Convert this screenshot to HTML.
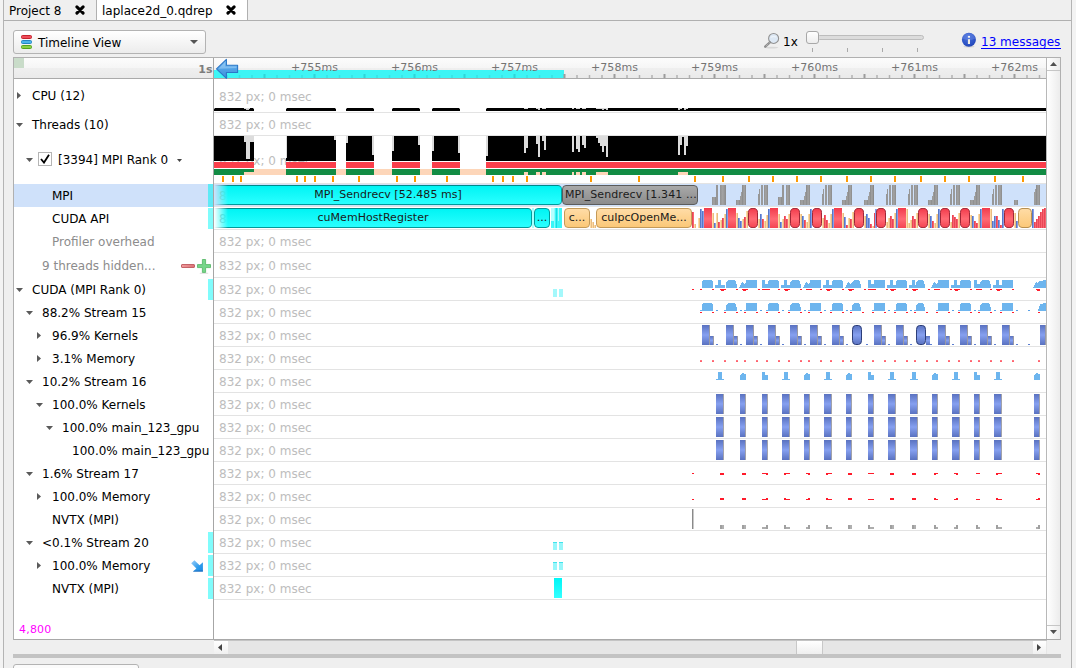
<!DOCTYPE html><html><head><meta charset="utf-8"><title>laplace2d_0.qdrep</title><style>
html,body{margin:0;padding:0;}
body{width:1076px;height:668px;overflow:hidden;background:#efefef;font-family:"DejaVu Sans","Liberation Sans",sans-serif;font-size:12px;color:#000;position:relative;}
div,span,svg{position:absolute;box-sizing:border-box;}
.t{white-space:nowrap;line-height:14px;height:14px;letter-spacing:0;}
.g{color:#bdbdbd;letter-spacing:0;}
.lbl{white-space:nowrap;line-height:14px;height:14px;left:0;}
.dim{color:#8c8c8c;}
.sep{left:214px;width:832px;height:1px;background:#e3e3e3;}
.rt{white-space:nowrap;line-height:12px;font-size:11px;letter-spacing:0.03px;color:#747474;text-align:center;width:60px;}
.bt{white-space:nowrap;line-height:14px;font-size:12px;text-align:center;overflow:hidden;}
</style></head><body>
<div style="left:0px;top:0px;width:3px;height:668px;background:#f3f3f3;"></div>
<div style="left:3px;top:0px;width:1px;height:668px;background:#b4b4b4;"></div>
<div style="left:1071px;top:0px;width:1px;height:668px;background:#b4b4b4;"></div>
<div style="left:1072px;top:0px;width:4px;height:668px;background:#f3f3f3;"></div>
<div style="left:97px;top:0px;width:150px;height:20px;background:#ffffff;"></div>
<div style="left:4px;top:20px;width:1067px;height:1px;background:#b0b0b0;"></div>
<div style="left:96px;top:0px;width:1px;height:20px;background:#b0b0b0;"></div>
<div style="left:247px;top:0px;width:1px;height:20px;background:#b0b0b0;"></div>
<div class="t" style="left:9px;top:4px;">Project 8</div>
<div class="t" style="left:102px;top:4px;">laplace2d_0.qdrep</div>
<svg style="left:75px;top:5px;" width="10" height="10" viewBox="0 0 10 10"><path d="M1.9 1.9 L8.1 8.1 M8.1 1.9 L1.9 8.1" stroke="#000" stroke-width="3" stroke-linecap="round"/></svg>
<svg style="left:226px;top:5px;" width="10" height="10" viewBox="0 0 10 10"><path d="M1.9 1.9 L8.1 8.1 M8.1 1.9 L1.9 8.1" stroke="#000" stroke-width="3" stroke-linecap="round"/></svg>
<div style="left:13px;top:30px;width:193px;height:24px;border:1px solid #b3b3b3;border-radius:3px;background:linear-gradient(#ffffff,#ececec);"></div>
<svg style="left:21px;top:35px;" width="11" height="14" viewBox="0 0 11 14"><rect x="0.5" y="0.5" width="10" height="3" rx="1" fill="#ee4a58" stroke="#c4232c"/><rect x="0.5" y="5.5" width="10" height="3" rx="1" fill="#4ab4ea" stroke="#2484c4"/><rect x="0.5" y="10.5" width="10" height="3" rx="1" fill="#8ad044" stroke="#56a222"/></svg>
<div class="t" style="left:38px;top:36px;">Timeline View</div>
<svg style="left:190px;top:40px;" width="8" height="4" viewBox="0 0 8 4"><path d="M0 0 L8 0 L4 4 Z" fill="#555"/></svg>
<svg style="left:763px;top:32px;" width="17" height="17" viewBox="0 0 17 17"><ellipse cx="8.5" cy="15.6" rx="7" ry="0.8" fill="#d8d8d8"/><circle cx="10.6" cy="6.45" r="5" fill="#dde8f4" stroke="#929292" stroke-width="1.1"/><path d="M7.6 5.2 Q10 4.2 13.4 5" stroke="#f4f8fc" stroke-width="1" fill="none"/><path d="M6.9 10.4 L2.2 14.7" stroke="#8c8c8c" stroke-width="2.3" stroke-linecap="round"/><path d="M6.6 10.7 L2.5 14.4" stroke="#d4d4d4" stroke-width="0.8" stroke-dasharray="1 1"/></svg>
<div class="t" style="left:783px;top:35px;">1x</div>
<div style="left:817px;top:35px;width:107px;height:5px;border:1px solid #bdbdbd;border-radius:3px;background:#dcdcdc;"></div>
<div style="left:806px;top:31px;width:13px;height:13px;border:1px solid #a8a8a8;border-radius:3px;background:linear-gradient(#ffffff,#ededed);"></div>
<div style="left:812px;top:48px;width:1px;height:4px;background:#a9a9a9;"></div>
<div style="left:847px;top:48px;width:1px;height:4px;background:#a9a9a9;"></div>
<div style="left:882px;top:48px;width:1px;height:4px;background:#a9a9a9;"></div>
<div style="left:917px;top:48px;width:1px;height:4px;background:#a9a9a9;"></div>
<svg style="left:961px;top:32px;" width="16" height="16" viewBox="0 0 16 16"><defs><radialGradient id="ig" cx="0.4" cy="0.3" r="0.8"><stop offset="0" stop-color="#4a72dc"/><stop offset="0.7" stop-color="#2c52c4"/><stop offset="1" stop-color="#1c3cac"/></radialGradient></defs><ellipse cx="8" cy="14.6" rx="5.5" ry="0.9" fill="#d4d4d4"/><circle cx="7.9" cy="7.7" r="7" fill="url(#ig)"/><path d="M1.6 6.6 A6.4 6.4 0 0 1 14.2 6.6 Q8 9.6 1.6 6.6 Z" fill="#6a8ae4" opacity="0.45"/><rect x="6.9" y="7.2" width="2.1" height="4.8" fill="#f2eee2"/><rect x="6.9" y="3.9" width="2.1" height="1.8" fill="#f8f6f0"/></svg>
<div class="t" style="left:981px;top:35px;color:#0000ff;letter-spacing:0;">13 messages</div>
<div style="left:981px;top:48px;width:80px;height:1px;background:#0000ff;"></div>
<div style="left:13px;top:57px;width:1048px;height:583px;background:#ffffff;border:1px solid #b0b0b0;"></div>
<div style="left:14px;top:58px;width:1032px;height:20px;background:linear-gradient(#fcfcfc 0%,#f6f6f6 48%,#efefef 52%,#eaeaea 100%);"></div>
<div style="left:14px;top:78px;width:1032px;height:1px;background:#aaaaaa;"></div>
<div style="left:14px;top:58px;width:10px;height:10px;background:#c9dcc9;"></div>
<div class="t" style="left:150.5px;top:63px;width:62px;text-align:right;font-weight:bold;font-size:11px;color:#7d7d7d;">1s</div>
<div style="left:214px;top:70px;width:350px;height:8px;background:#3df5f5;"></div>
<div class="rt" style="left:284.5px;top:61.5px;">+755ms</div>
<div class="rt" style="left:384.5px;top:61.5px;">+756ms</div>
<div class="rt" style="left:484.5px;top:61.5px;">+757ms</div>
<div class="rt" style="left:584.5px;top:61.5px;">+758ms</div>
<div class="rt" style="left:684.5px;top:61.5px;">+759ms</div>
<div class="rt" style="left:784.5px;top:61.5px;">+760ms</div>
<div class="rt" style="left:884.5px;top:61.5px;">+761ms</div>
<div class="rt" style="left:984.5px;top:61.5px;">+762ms</div>
<svg style="left:0;top:0;" width="1076" height="80" viewBox="0 0 1076 80"><rect x="226.25" y="75" width="1.5" height="3" fill="#37e2e4"/><rect x="238.75" y="75" width="1.5" height="3" fill="#37e2e4"/><rect x="251.25" y="75" width="1.5" height="3" fill="#37e2e4"/><rect x="263.50" y="74" width="2" height="4" fill="#2fd6d8"/><rect x="276.25" y="75" width="1.5" height="3" fill="#37e2e4"/><rect x="288.75" y="75" width="1.5" height="3" fill="#37e2e4"/><rect x="301.25" y="75" width="1.5" height="3" fill="#37e2e4"/><rect x="313.50" y="74" width="2" height="4" fill="#2fd6d8"/><rect x="326.25" y="75" width="1.5" height="3" fill="#37e2e4"/><rect x="338.75" y="75" width="1.5" height="3" fill="#37e2e4"/><rect x="351.25" y="75" width="1.5" height="3" fill="#37e2e4"/><rect x="363.50" y="74" width="2" height="4" fill="#2fd6d8"/><rect x="376.25" y="75" width="1.5" height="3" fill="#37e2e4"/><rect x="388.75" y="75" width="1.5" height="3" fill="#37e2e4"/><rect x="401.25" y="75" width="1.5" height="3" fill="#37e2e4"/><rect x="413.50" y="74" width="2" height="4" fill="#2fd6d8"/><rect x="426.25" y="75" width="1.5" height="3" fill="#37e2e4"/><rect x="438.75" y="75" width="1.5" height="3" fill="#37e2e4"/><rect x="451.25" y="75" width="1.5" height="3" fill="#37e2e4"/><rect x="463.50" y="74" width="2" height="4" fill="#2fd6d8"/><rect x="476.25" y="75" width="1.5" height="3" fill="#37e2e4"/><rect x="488.75" y="75" width="1.5" height="3" fill="#37e2e4"/><rect x="501.25" y="75" width="1.5" height="3" fill="#37e2e4"/><rect x="513.50" y="74" width="2" height="4" fill="#2fd6d8"/><rect x="526.25" y="75" width="1.5" height="3" fill="#37e2e4"/><rect x="538.75" y="75" width="1.5" height="3" fill="#37e2e4"/><rect x="551.25" y="75" width="1.5" height="3" fill="#37e2e4"/><rect x="563.50" y="74" width="2" height="4" fill="#9c9c9c"/><rect x="576.25" y="75" width="1.5" height="3" fill="#b2b2b2"/><rect x="588.75" y="75" width="1.5" height="3" fill="#b2b2b2"/><rect x="601.25" y="75" width="1.5" height="3" fill="#b2b2b2"/><rect x="613.50" y="74" width="2" height="4" fill="#9c9c9c"/><rect x="626.25" y="75" width="1.5" height="3" fill="#b2b2b2"/><rect x="638.75" y="75" width="1.5" height="3" fill="#b2b2b2"/><rect x="651.25" y="75" width="1.5" height="3" fill="#b2b2b2"/><rect x="663.50" y="74" width="2" height="4" fill="#9c9c9c"/><rect x="676.25" y="75" width="1.5" height="3" fill="#b2b2b2"/><rect x="688.75" y="75" width="1.5" height="3" fill="#b2b2b2"/><rect x="701.25" y="75" width="1.5" height="3" fill="#b2b2b2"/><rect x="713.50" y="74" width="2" height="4" fill="#9c9c9c"/><rect x="726.25" y="75" width="1.5" height="3" fill="#b2b2b2"/><rect x="738.75" y="75" width="1.5" height="3" fill="#b2b2b2"/><rect x="751.25" y="75" width="1.5" height="3" fill="#b2b2b2"/><rect x="763.50" y="74" width="2" height="4" fill="#9c9c9c"/><rect x="776.25" y="75" width="1.5" height="3" fill="#b2b2b2"/><rect x="788.75" y="75" width="1.5" height="3" fill="#b2b2b2"/><rect x="801.25" y="75" width="1.5" height="3" fill="#b2b2b2"/><rect x="813.50" y="74" width="2" height="4" fill="#9c9c9c"/><rect x="826.25" y="75" width="1.5" height="3" fill="#b2b2b2"/><rect x="838.75" y="75" width="1.5" height="3" fill="#b2b2b2"/><rect x="851.25" y="75" width="1.5" height="3" fill="#b2b2b2"/><rect x="863.50" y="74" width="2" height="4" fill="#9c9c9c"/><rect x="876.25" y="75" width="1.5" height="3" fill="#b2b2b2"/><rect x="888.75" y="75" width="1.5" height="3" fill="#b2b2b2"/><rect x="901.25" y="75" width="1.5" height="3" fill="#b2b2b2"/><rect x="913.50" y="74" width="2" height="4" fill="#9c9c9c"/><rect x="926.25" y="75" width="1.5" height="3" fill="#b2b2b2"/><rect x="938.75" y="75" width="1.5" height="3" fill="#b2b2b2"/><rect x="951.25" y="75" width="1.5" height="3" fill="#b2b2b2"/><rect x="963.50" y="74" width="2" height="4" fill="#9c9c9c"/><rect x="976.25" y="75" width="1.5" height="3" fill="#b2b2b2"/><rect x="988.75" y="75" width="1.5" height="3" fill="#b2b2b2"/><rect x="1001.25" y="75" width="1.5" height="3" fill="#b2b2b2"/><rect x="1013.50" y="74" width="2" height="4" fill="#9c9c9c"/><rect x="1026.25" y="75" width="1.5" height="3" fill="#b2b2b2"/><rect x="1038.75" y="75" width="1.5" height="3" fill="#b2b2b2"/></svg>
<svg style="left:215px;top:58px;" width="24" height="22" viewBox="0 0 24 22"><defs><linearGradient id="ag" x1="0" y1="0" x2="0" y2="1"><stop offset="0" stop-color="#86c4f4"/><stop offset="0.5" stop-color="#52a2e6"/><stop offset="1" stop-color="#3a90dc"/></linearGradient></defs><path d="M11.4 1.4 L1.5 10.9 L11.4 20.3 L11.4 14.5 L22.6 14.5 L22.6 7.3 L11.4 7.3 Z" fill="url(#ag)" stroke="#2b77c8" stroke-width="1.1" stroke-linejoin="round"/><path d="M10.2 4.2 L3.4 10.8 L10.2 10.4 L21.4 10 L21.4 8.4 L10.2 8.4 Z" fill="#9fd0f6" opacity="0.55"/></svg>
<div style="left:213px;top:58px;width:1px;height:582px;background:#a6a6a6;"></div>
<div style="left:1046px;top:58px;width:1px;height:582px;background:#b8b8b8;"></div>
<div style="left:1047px;top:58px;width:13px;height:581px;background:linear-gradient(90deg,#ffffff,#ececec);"></div>
<div style="left:1047px;top:70px;width:13px;height:1px;background:#c6c6c6;"></div>
<div style="left:1047px;top:625px;width:13px;height:1px;background:#c6c6c6;"></div>
<svg style="left:1050px;top:62px;" width="7" height="4" viewBox="0 0 7 4"><path d="M0 4 L7 4 L3.5 0 Z" fill="#505050"/></svg>
<svg style="left:1050px;top:630px;" width="7" height="4" viewBox="0 0 7 4"><path d="M0 0 L7 0 L3.5 4 Z" fill="#505050"/></svg>
<div style="left:14px;top:639px;width:1046px;height:1px;background:#a8a8a8;"></div>
<div style="left:13px;top:640px;width:1048px;height:1px;background:#efefef;"></div>
<div style="left:214px;top:640px;width:833px;height:1px;background:#c4c4c4;"></div>
<div style="left:214px;top:641px;width:833px;height:13px;background:#e6e6e6;"></div>
<div style="left:214px;top:641px;width:14px;height:13px;background:linear-gradient(#ffffff,#f0f0f0);"></div>
<div style="left:1033px;top:641px;width:13px;height:13px;background:linear-gradient(#ffffff,#f0f0f0);"></div>
<svg style="left:218px;top:644px;" width="4" height="7" viewBox="0 0 4 7"><path d="M4 0 L4 7 L0 3.5 Z" fill="#444"/></svg>
<svg style="left:1037px;top:644px;" width="4" height="7" viewBox="0 0 4 7"><path d="M0 0 L0 7 L4 3.5 Z" fill="#444"/></svg>
<div style="left:796px;top:641px;width:27px;height:13px;background:linear-gradient(#ffffff,#efefef);border-left:1px solid #c8c8c8;border-right:1px solid #c8c8c8;"></div>
<div style="left:13px;top:654px;width:1048px;height:4px;background:#c3c3c3;"></div>
<div style="left:13px;top:664px;width:126px;height:10px;border:1px solid #b3b3b3;border-radius:3px;background:#fbfbfb;"></div>
<div class="t" style="left:19px;top:623px;font-size:11px;letter-spacing:0.2px;color:#ff00ff;">4,800</div>
<div style="left:14px;top:184px;width:199px;height:23px;background:#cfe1fa;"></div>
<div style="left:214px;top:184px;width:832px;height:23px;background:#cfe1fa;"></div>
<div class="t" style="left:32px;top:89px;">CPU (12)</div>
<svg style="left:17px;top:92px;" width="4" height="7" viewBox="0 0 4 7"><path d="M0 0 L4 3.5 L0 7 Z" fill="#5a5a5a"/></svg>
<div class="t" style="left:32px;top:118px;">Threads (10)</div>
<svg style="left:16px;top:123px;" width="7" height="4" viewBox="0 0 7 4"><path d="M0 0 L7 0 L3.5 4 Z" fill="#5a5a5a"/></svg>
<div class="t" style="left:58px;top:153px;">[3394] MPI Rank 0</div>
<svg style="left:26px;top:158px;" width="7" height="4" viewBox="0 0 7 4"><path d="M0 0 L7 0 L3.5 4 Z" fill="#5a5a5a"/></svg>
<div class="t" style="left:52px;top:189px;">MPI</div>
<div class="t" style="left:52px;top:212px;">CUDA API</div>
<div class="t dim" style="left:52px;top:235px;">Profiler overhead</div>
<div class="t dim" style="left:42px;top:259px;">9 threads hidden...</div>
<div class="t" style="left:32px;top:283px;">CUDA (MPI Rank 0)</div>
<svg style="left:16px;top:288px;" width="7" height="4" viewBox="0 0 7 4"><path d="M0 0 L7 0 L3.5 4 Z" fill="#5a5a5a"/></svg>
<div class="t" style="left:42px;top:306px;">88.2% Stream 15</div>
<svg style="left:26px;top:311px;" width="7" height="4" viewBox="0 0 7 4"><path d="M0 0 L7 0 L3.5 4 Z" fill="#5a5a5a"/></svg>
<div class="t" style="left:52px;top:329px;">96.9% Kernels</div>
<svg style="left:37px;top:332px;" width="4" height="7" viewBox="0 0 4 7"><path d="M0 0 L4 3.5 L0 7 Z" fill="#5a5a5a"/></svg>
<div class="t" style="left:52px;top:352px;">3.1% Memory</div>
<svg style="left:37px;top:355px;" width="4" height="7" viewBox="0 0 4 7"><path d="M0 0 L4 3.5 L0 7 Z" fill="#5a5a5a"/></svg>
<div class="t" style="left:42px;top:375px;">10.2% Stream 16</div>
<svg style="left:26px;top:380px;" width="7" height="4" viewBox="0 0 7 4"><path d="M0 0 L7 0 L3.5 4 Z" fill="#5a5a5a"/></svg>
<div class="t" style="left:52px;top:398px;">100.0% Kernels</div>
<svg style="left:36px;top:403px;" width="7" height="4" viewBox="0 0 7 4"><path d="M0 0 L7 0 L3.5 4 Z" fill="#5a5a5a"/></svg>
<div class="t" style="left:62px;top:421px;">100.0% main_123_gpu</div>
<svg style="left:46px;top:426px;" width="7" height="4" viewBox="0 0 7 4"><path d="M0 0 L7 0 L3.5 4 Z" fill="#5a5a5a"/></svg>
<div class="t" style="left:72px;top:444px;">100.0% main_123_gpu</div>
<div class="t" style="left:42px;top:467px;">1.6% Stream 17</div>
<svg style="left:26px;top:472px;" width="7" height="4" viewBox="0 0 7 4"><path d="M0 0 L7 0 L3.5 4 Z" fill="#5a5a5a"/></svg>
<div class="t" style="left:52px;top:490px;">100.0% Memory</div>
<svg style="left:37px;top:493px;" width="4" height="7" viewBox="0 0 4 7"><path d="M0 0 L4 3.5 L0 7 Z" fill="#5a5a5a"/></svg>
<div class="t" style="left:52px;top:513px;">NVTX (MPI)</div>
<div class="t" style="left:42px;top:536px;">&lt;0.1% Stream 20</div>
<svg style="left:26px;top:541px;" width="7" height="4" viewBox="0 0 7 4"><path d="M0 0 L7 0 L3.5 4 Z" fill="#5a5a5a"/></svg>
<div class="t" style="left:52px;top:559px;">100.0% Memory</div>
<svg style="left:37px;top:562px;" width="4" height="7" viewBox="0 0 4 7"><path d="M0 0 L4 3.5 L0 7 Z" fill="#5a5a5a"/></svg>
<div class="t" style="left:52px;top:582px;">NVTX (MPI)</div>
<div style="left:38px;top:152px;width:14px;height:14px;background:#fff;border:1px solid #b5b5b5;"></div>
<svg style="left:40px;top:154px;" width="10" height="10" viewBox="0 0 10 10"><path d="M1 5 L4 8.6 L9 0.8" fill="none" stroke="#000" stroke-width="1.8"/></svg>
<svg style="left:177px;top:159px;" width="5" height="3" viewBox="0 0 5 3"><path d="M0 0 L5 0 L2.5 3 Z" fill="#444"/></svg>
<div style="left:181px;top:264px;width:14px;height:4px;background:linear-gradient(90deg,#f09a9c,#dc7478);border:1px solid #c46468;border-radius:1px;"></div>
<svg style="left:197px;top:259px;" width="14" height="15" viewBox="0 0 14 15"><ellipse cx="7" cy="14.2" rx="4.5" ry="0.6" fill="#dcdcdc"/><path d="M5.4 0.5 H8.6 V5.6 H13.5 V8.6 H8.6 V13.4 H5.4 V8.6 H0.5 V5.6 H5.4 Z" fill="#76d68a" stroke="#5cba6c" stroke-width="0.9" stroke-linejoin="round"/></svg>
<svg style="left:191.4px;top:560px;" width="13" height="13" viewBox="0 0 13 13"><defs><linearGradient id="dg" x1="0" y1="0" x2="1" y2="1"><stop offset="0" stop-color="#9ed0fa"/><stop offset="0.6" stop-color="#2e9cec"/><stop offset="1" stop-color="#1888e4"/></linearGradient></defs><path d="M0.2 3.3 L3.4 0.2 L8.6 5.2 L11.9 2.2 L11.9 11.6 L2 11.6 L5.4 8.4 Z" fill="url(#dg)"/><path d="M2 11.6 L11.9 11.6 L11.9 10.6 L3 10.8 Z" fill="#1f64b4"/></svg>
<div class="sep" style="top:112px;"></div>
<div class="sep" style="top:135px;"></div>
<div class="sep" style="top:183px;"></div>
<div class="sep" style="top:206px;"></div>
<div class="sep" style="top:229px;"></div>
<div class="sep" style="top:252px;"></div>
<div class="sep" style="top:277px;"></div>
<div class="sep" style="top:300px;"></div>
<div class="sep" style="top:323px;"></div>
<div class="sep" style="top:346px;"></div>
<div class="sep" style="top:369px;"></div>
<div class="sep" style="top:392px;"></div>
<div class="sep" style="top:415px;"></div>
<div class="sep" style="top:438px;"></div>
<div class="sep" style="top:461px;"></div>
<div class="sep" style="top:484px;"></div>
<div class="sep" style="top:507px;"></div>
<div class="sep" style="top:530px;"></div>
<div class="sep" style="top:553px;"></div>
<div class="sep" style="top:576px;"></div>
<div class="sep" style="top:599px;"></div>
<div class="t g" style="left:219px;top:90px;">832 px; 0 msec</div>
<div class="t g" style="left:219px;top:118px;">832 px; 0 msec</div>
<div class="t g" style="left:219px;top:154px;">832 px; 0 msec</div>
<div class="t g" style="left:219px;top:189px;">832 px; 0 msec</div>
<div class="t g" style="left:219px;top:212px;">832 px; 0 msec</div>
<div class="t g" style="left:219px;top:235px;">832 px; 0 msec</div>
<div class="t g" style="left:219px;top:259px;">832 px; 0 msec</div>
<div class="t g" style="left:219px;top:283px;">832 px; 0 msec</div>
<div class="t g" style="left:219px;top:306px;">832 px; 0 msec</div>
<div class="t g" style="left:219px;top:329px;">832 px; 0 msec</div>
<div class="t g" style="left:219px;top:352px;">832 px; 0 msec</div>
<div class="t g" style="left:219px;top:375px;">832 px; 0 msec</div>
<div class="t g" style="left:219px;top:398px;">832 px; 0 msec</div>
<div class="t g" style="left:219px;top:421px;">832 px; 0 msec</div>
<div class="t g" style="left:219px;top:444px;">832 px; 0 msec</div>
<div class="t g" style="left:219px;top:467px;">832 px; 0 msec</div>
<div class="t g" style="left:219px;top:490px;">832 px; 0 msec</div>
<div class="t g" style="left:219px;top:513px;">832 px; 0 msec</div>
<div class="t g" style="left:219px;top:536px;">832 px; 0 msec</div>
<div class="t g" style="left:219px;top:559px;">832 px; 0 msec</div>
<div class="t g" style="left:219px;top:582px;">832 px; 0 msec</div>
<div style="left:208px;top:184px;width:5px;height:23px;background:#5eeaf6;"></div>
<div style="left:208px;top:208px;width:5px;height:21px;background:#80fcfc;"></div>
<div style="left:208px;top:279px;width:5px;height:21px;background:#80fcfc;"></div>
<div style="left:208px;top:532px;width:5px;height:21px;background:#80fcfc;"></div>
<div style="left:208px;top:555px;width:5px;height:21px;background:#80fcfc;"></div>
<div style="left:208px;top:578px;width:5px;height:21px;background:#80fcfc;"></div>
<svg style="left:0;top:0;" width="1076" height="668" viewBox="0 0 1076 668" shape-rendering="crispEdges"><defs>
<linearGradient id="kb" x1="0" y1="0" x2="0" y2="1"><stop offset="0" stop-color="#5a72c0"/><stop offset="0.5" stop-color="#86a0f0"/><stop offset="1" stop-color="#5a72c0"/></linearGradient>
<linearGradient id="rd" x1="0" y1="0" x2="0" y2="1"><stop offset="0" stop-color="#f23c4c"/><stop offset="0.55" stop-color="#ff6a74"/><stop offset="1" stop-color="#f44452"/></linearGradient>
<linearGradient id="gy" x1="0" y1="0" x2="1" y2="0"><stop offset="0" stop-color="#8e8e8e"/><stop offset="0.5" stop-color="#a4a4a4"/><stop offset="1" stop-color="#8a8a8a"/></linearGradient>
<linearGradient id="pc" x1="0" y1="0" x2="0" y2="1"><stop offset="0" stop-color="#ffdca6"/><stop offset="1" stop-color="#fbc878"/></linearGradient>
<linearGradient id="cy" x1="0" y1="0" x2="0" y2="1"><stop offset="0" stop-color="#00f6f6"/><stop offset="1" stop-color="#34ffff"/></linearGradient>
</defs>
<rect x="214" y="108" width="40" height="3" fill="#000"/>
<rect x="286" y="108" width="50" height="3" fill="#000"/>
<rect x="346" y="108" width="28" height="3" fill="#000"/>
<rect x="392" y="108" width="28" height="3" fill="#000"/>
<rect x="432" y="108" width="28" height="3" fill="#000"/>
<rect x="486" y="108" width="560" height="3" fill="#000"/>
<rect x="244" y="108" width="6" height="1" fill="#d8d8d8"/>
<rect x="524" y="108" width="4" height="1" fill="#d8d8d8"/>
<rect x="536" y="108" width="4" height="1" fill="#d8d8d8"/>
<rect x="542" y="108" width="4" height="1" fill="#d8d8d8"/>
<rect x="572" y="108" width="2" height="1" fill="#d8d8d8"/>
<rect x="576" y="108" width="4" height="1" fill="#d8d8d8"/>
<rect x="582" y="108" width="4" height="1" fill="#d8d8d8"/>
<rect x="596" y="108" width="12" height="1" fill="#d8d8d8"/>
<rect x="678" y="108" width="4" height="1" fill="#d8d8d8"/>
<rect x="684" y="108" width="4" height="1" fill="#d8d8d8"/>
<rect x="246" y="109" width="3" height="1" fill="#c8c8c8"/>
<rect x="538" y="109" width="2" height="1" fill="#c8c8c8"/>
<rect x="606" y="109" width="2" height="1" fill="#c8c8c8"/>
<rect x="602" y="109" width="2" height="1" fill="#c8c8c8"/>
<rect x="678" y="109" width="2" height="1" fill="#c8c8c8"/>
<rect x="684" y="109" width="2" height="1" fill="#c8c8c8"/>
<rect x="214" y="108" width="1" height="1" fill="#999"/>
<rect x="253" y="108" width="1" height="1" fill="#999"/>
<rect x="286" y="108" width="1" height="1" fill="#999"/>
<rect x="335" y="108" width="1" height="1" fill="#999"/>
<rect x="346" y="108" width="1" height="1" fill="#999"/>
<rect x="373" y="108" width="1" height="1" fill="#999"/>
<rect x="392" y="108" width="1" height="1" fill="#999"/>
<rect x="419" y="108" width="1" height="1" fill="#999"/>
<rect x="432" y="108" width="1" height="1" fill="#999"/>
<rect x="459" y="108" width="1" height="1" fill="#999"/>
<rect x="486" y="108" width="1" height="1" fill="#999"/>
<rect x="214" y="136" width="40" height="25" fill="#000"/>
<rect x="214" y="162" width="40" height="6" fill="#fa3f4b"/>
<rect x="286" y="136" width="50" height="25" fill="#000"/>
<rect x="286" y="162" width="50" height="6" fill="#fa3f4b"/>
<rect x="346" y="136" width="28" height="25" fill="#000"/>
<rect x="346" y="162" width="28" height="6" fill="#fa3f4b"/>
<rect x="392" y="136" width="28" height="25" fill="#000"/>
<rect x="392" y="162" width="28" height="6" fill="#fa3f4b"/>
<rect x="432" y="136" width="28" height="25" fill="#000"/>
<rect x="432" y="162" width="28" height="6" fill="#fa3f4b"/>
<rect x="486" y="136" width="560" height="25" fill="#000"/>
<rect x="486" y="162" width="560" height="6" fill="#fa3f4b"/>
<rect x="244" y="169" width="242" height="6" fill="#fdd6b9"/>
<rect x="214" y="169" width="40" height="6" fill="#128c44"/>
<rect x="286" y="169" width="50" height="6" fill="#128c44"/>
<rect x="346" y="169" width="28" height="6" fill="#128c44"/>
<rect x="392" y="169" width="28" height="6" fill="#128c44"/>
<rect x="432" y="169" width="28" height="6" fill="#128c44"/>
<rect x="486" y="169" width="560" height="6" fill="#128c44"/>
<rect x="244" y="172" width="10" height="3" fill="#fdd6b9"/>
<rect x="244" y="136" width="10" height="6" fill="#dcdcdc"/>
<rect x="246" y="136" width="4" height="23" fill="#dcdcdc"/>
<rect x="286" y="136" width="1" height="22" fill="#dcdcdc"/>
<rect x="334" y="136" width="2" height="4" fill="#dcdcdc"/>
<rect x="346" y="136" width="2" height="7" fill="#dcdcdc"/>
<rect x="372" y="136" width="2" height="19" fill="#dcdcdc"/>
<rect x="392" y="136" width="2" height="15" fill="#dcdcdc"/>
<rect x="418" y="136" width="2" height="9" fill="#dcdcdc"/>
<rect x="432" y="136" width="2" height="15" fill="#dcdcdc"/>
<rect x="458" y="136" width="2" height="17" fill="#dcdcdc"/>
<rect x="486" y="136" width="2" height="20" fill="#dcdcdc"/>
<rect x="524" y="136" width="2" height="17" fill="#dcdcdc"/>
<rect x="526" y="136" width="2" height="12" fill="#dcdcdc"/>
<rect x="536" y="136" width="2" height="8" fill="#dcdcdc"/>
<rect x="538" y="136" width="2" height="21" fill="#dcdcdc"/>
<rect x="542" y="136" width="2" height="5" fill="#dcdcdc"/>
<rect x="544" y="136" width="2" height="14" fill="#dcdcdc"/>
<rect x="572" y="136" width="2" height="16" fill="#dcdcdc"/>
<rect x="576" y="136" width="2" height="13" fill="#dcdcdc"/>
<rect x="578" y="136" width="2" height="16" fill="#dcdcdc"/>
<rect x="582" y="136" width="2" height="9" fill="#dcdcdc"/>
<rect x="584" y="136" width="2" height="12" fill="#dcdcdc"/>
<rect x="596" y="136" width="2" height="2" fill="#dcdcdc"/>
<rect x="598" y="136" width="2" height="7" fill="#dcdcdc"/>
<rect x="600" y="136" width="2" height="10" fill="#dcdcdc"/>
<rect x="602" y="136" width="2" height="16" fill="#dcdcdc"/>
<rect x="604" y="136" width="2" height="10" fill="#dcdcdc"/>
<rect x="606" y="136" width="2" height="21" fill="#dcdcdc"/>
<rect x="678" y="136" width="2" height="19" fill="#dcdcdc"/>
<rect x="680" y="136" width="2" height="9" fill="#dcdcdc"/>
<rect x="682" y="136" width="2" height="1" fill="#dcdcdc"/>
<rect x="684" y="136" width="2" height="19" fill="#dcdcdc"/>
<rect x="686" y="136" width="2" height="10" fill="#dcdcdc"/>
<rect x="250" y="142" width="4" height="19" fill="#000"/>
<rect x="524" y="172" width="4" height="3" fill="#fdd6b9"/>
<rect x="536" y="172" width="4" height="3" fill="#fdd6b9"/>
<rect x="542" y="172" width="4" height="3" fill="#fdd6b9"/>
<rect x="572" y="172" width="2" height="3" fill="#fdd6b9"/>
<rect x="576" y="172" width="4" height="3" fill="#fdd6b9"/>
<rect x="582" y="172" width="4" height="3" fill="#fdd6b9"/>
<rect x="596" y="172" width="12" height="3" fill="#fdd6b9"/>
<rect x="678" y="172" width="10" height="3" fill="#fdd6b9"/>
<rect x="222" y="176" width="2" height="6" fill="#ff9900"/>
<rect x="232" y="176" width="2" height="6" fill="#ff9900"/>
<rect x="240" y="176" width="2" height="6" fill="#ff9900"/>
<rect x="296" y="176" width="2" height="6" fill="#ff9900"/>
<rect x="304" y="176" width="2" height="6" fill="#ff9900"/>
<rect x="314" y="176" width="2" height="6" fill="#ff9900"/>
<rect x="332" y="176" width="2" height="6" fill="#ff9900"/>
<rect x="358" y="176" width="2" height="6" fill="#ff9900"/>
<rect x="396" y="176" width="2" height="6" fill="#ff9900"/>
<rect x="414" y="176" width="2" height="6" fill="#ff9900"/>
<rect x="446" y="176" width="2" height="6" fill="#ff9900"/>
<rect x="492" y="176" width="2" height="6" fill="#ff9900"/>
<rect x="502" y="176" width="2" height="6" fill="#ff9900"/>
<rect x="512" y="176" width="2" height="6" fill="#ff9900"/>
<rect x="526" y="176" width="2" height="6" fill="#ff9900"/>
<rect x="590" y="176" width="2" height="6" fill="#ff9900"/>
<rect x="638" y="176" width="2" height="6" fill="#ff9900"/>
<rect x="694" y="176" width="2" height="6" fill="#ff9900"/>
<rect x="722" y="176" width="2" height="6" fill="#ff9900"/>
<rect x="748" y="176" width="2" height="6" fill="#ff9900"/>
<rect x="772" y="176" width="2" height="6" fill="#ff9900"/>
<rect x="796" y="176" width="2" height="6" fill="#ff9900"/>
<rect x="820" y="176" width="2" height="6" fill="#ff9900"/>
<rect x="846" y="176" width="2" height="6" fill="#ff9900"/>
<rect x="870" y="176" width="2" height="6" fill="#ff9900"/>
<rect x="894" y="176" width="2" height="6" fill="#ff9900"/>
<rect x="920" y="176" width="2" height="6" fill="#ff9900"/>
<rect x="944" y="176" width="2" height="6" fill="#ff9900"/>
<rect x="968" y="176" width="2" height="6" fill="#ff9900"/>
<rect x="994" y="176" width="2" height="6" fill="#ff9900"/>
<rect x="1022" y="176" width="2" height="6" fill="#ff9900"/>
<rect x="712" y="197" width="4" height="8" fill="url(#gy)"/>
<rect x="716" y="185" width="2" height="20" fill="#969696"/>
<rect x="719.5" y="185" width="6.5" height="20" fill="url(#gy)"/>
<rect x="736" y="200" width="4" height="5" fill="url(#gy)"/>
<path d="M740 205 L740 198 L742 190 L742 205 Z" fill="#9c9c9c"/>
<rect x="742.4" y="185" width="3.6000000000000227" height="20" fill="url(#gy)"/>
<path d="M758 205 L758 197 L760 186 L760 205 Z" fill="#979797"/>
<rect x="760.6" y="185" width="2.3999999999999773" height="20" fill="#9a9a9a"/>
<rect x="763.8" y="185" width="4.2000000000000455" height="20" fill="url(#gy)"/>
<rect x="778" y="197" width="4" height="8" fill="url(#gy)"/>
<rect x="782" y="185" width="2" height="20" fill="#969696"/>
<rect x="785.5" y="185" width="4.5" height="20" fill="url(#gy)"/>
<rect x="800" y="200" width="4" height="5" fill="url(#gy)"/>
<path d="M804 205 L804 198 L806 190 L806 205 Z" fill="#9c9c9c"/>
<rect x="806.4" y="185" width="3.6000000000000227" height="20" fill="url(#gy)"/>
<path d="M822 205 L822 197 L824 186 L824 205 Z" fill="#979797"/>
<rect x="824.6" y="185" width="2.3999999999999773" height="20" fill="#9a9a9a"/>
<rect x="827.8" y="185" width="4.2000000000000455" height="20" fill="url(#gy)"/>
<rect x="842" y="200" width="4" height="5" fill="url(#gy)"/>
<path d="M846 205 L846 198 L848 190 L848 205 Z" fill="#9c9c9c"/>
<rect x="848.4" y="185" width="3.6000000000000227" height="20" fill="url(#gy)"/>
<rect x="864" y="200" width="4" height="5" fill="url(#gy)"/>
<path d="M868 205 L868 198 L870 190 L870 205 Z" fill="#9c9c9c"/>
<rect x="870.4" y="185" width="3.1000000000000227" height="20" fill="url(#gy)"/>
<path d="M886 205 L886 197 L888 186 L888 205 Z" fill="#979797"/>
<rect x="888.6" y="185" width="2.3999999999999773" height="20" fill="#9a9a9a"/>
<rect x="891.8" y="185" width="4.2000000000000455" height="20" fill="url(#gy)"/>
<path d="M908 205 L908 197 L910 186 L910 205 Z" fill="#979797"/>
<rect x="910.6" y="185" width="2.3999999999999773" height="20" fill="#9a9a9a"/>
<rect x="913.8" y="185" width="4.2000000000000455" height="20" fill="url(#gy)"/>
<rect x="928" y="200" width="4" height="5" fill="url(#gy)"/>
<path d="M932 205 L932 198 L934 190 L934 205 Z" fill="#9c9c9c"/>
<rect x="934.4" y="185" width="3.6000000000000227" height="20" fill="url(#gy)"/>
<path d="M950 205 L950 197 L952 186 L952 205 Z" fill="#979797"/>
<rect x="952.6" y="185" width="2.3999999999999773" height="20" fill="#9a9a9a"/>
<rect x="955.8" y="185" width="4.2000000000000455" height="20" fill="url(#gy)"/>
<rect x="970" y="200" width="4" height="5" fill="url(#gy)"/>
<path d="M974 205 L974 198 L976 190 L976 205 Z" fill="#9c9c9c"/>
<rect x="976.4" y="185" width="3.6000000000000227" height="20" fill="url(#gy)"/>
<path d="M992 205 L992 197 L994 186 L994 205 Z" fill="#979797"/>
<rect x="994.6" y="185" width="2.3999999999999773" height="20" fill="#9a9a9a"/>
<rect x="997.8" y="185" width="4.2000000000000455" height="20" fill="url(#gy)"/>
<path d="M1034 205 L1034 194 L1036 188 L1036 205 Z" fill="#9c9c9c"/>
<rect x="1036.4" y="185" width="3.599999999999909" height="20" fill="url(#gy)"/>
<rect x="1014" y="200" width="4" height="5" fill="url(#gy)"/>
<rect x="692" y="212" width="2" height="16" fill="#f8646f"/>
<rect x="692" y="212" width="0.6000000000000227" height="16" fill="#e84656"/>
<rect x="694" y="224" width="2" height="4" fill="#fddaa4"/>
<rect x="695.4" y="224" width="0.6000000000000227" height="4" fill="#e8bc82"/>
<rect x="698" y="218" width="2" height="10" fill="#fddaa4"/>
<rect x="699.4" y="218" width="0.6000000000000227" height="10" fill="#e8bc82"/>
<rect x="700" y="209" width="2" height="19" fill="#86a0e8"/>
<rect x="700" y="209" width="0.7000000000000455" height="19" fill="#5878c8"/>
<rect x="702" y="211" width="2" height="17" fill="#86a0e8"/>
<rect x="702" y="211" width="0.7000000000000455" height="17" fill="#5878c8"/>
<rect x="704" y="208" width="8" height="20" fill="url(#rd)"/>
<rect x="712" y="213" width="2" height="15" fill="#fddaa4"/>
<rect x="713.4" y="213" width="0.6000000000000227" height="15" fill="#e8bc82"/>
<rect x="714" y="223" width="2" height="5" fill="#86a0e8"/>
<rect x="714" y="223" width="0.7000000000000455" height="5" fill="#5878c8"/>
<rect x="716" y="213" width="2" height="15" fill="#fddaa4"/>
<rect x="717.4" y="213" width="0.6000000000000227" height="15" fill="#e8bc82"/>
<rect x="718" y="222" width="2" height="6" fill="#f8646f"/>
<rect x="718" y="222" width="0.6000000000000227" height="6" fill="#e84656"/>
<rect x="720" y="220" width="2" height="8" fill="#fddaa4"/>
<rect x="721.4" y="220" width="0.6000000000000227" height="8" fill="#e8bc82"/>
<rect x="722" y="218" width="2" height="10" fill="#f8646f"/>
<rect x="722" y="218" width="0.6000000000000227" height="10" fill="#e84656"/>
<rect x="724" y="214" width="2" height="14" fill="#fddaa4"/>
<rect x="725.4" y="214" width="0.6000000000000227" height="14" fill="#e8bc82"/>
<rect x="726" y="209" width="2" height="19" fill="#86a0e8"/>
<rect x="726" y="209" width="0.7000000000000455" height="19" fill="#5878c8"/>
<rect x="728" y="208" width="8" height="20" fill="url(#rd)"/>
<rect x="736" y="213" width="2" height="15" fill="#fddaa4"/>
<rect x="737.4" y="213" width="0.6000000000000227" height="15" fill="#e8bc82"/>
<rect x="738" y="218" width="2" height="10" fill="#86a0e8"/>
<rect x="738" y="218" width="0.7000000000000455" height="10" fill="#5878c8"/>
<rect x="740" y="221" width="2" height="7" fill="#86a0e8"/>
<rect x="740" y="221" width="0.7000000000000455" height="7" fill="#5878c8"/>
<rect x="742" y="219" width="2" height="9" fill="#fddaa4"/>
<rect x="743.4" y="219" width="0.6000000000000227" height="9" fill="#e8bc82"/>
<rect x="744" y="217" width="2" height="11" fill="#f8646f"/>
<rect x="744" y="217" width="0.6000000000000227" height="11" fill="#e84656"/>
<rect x="746" y="211" width="2" height="17" fill="#fddaa4"/>
<rect x="747.4" y="211" width="0.6000000000000227" height="17" fill="#e8bc82"/>
<rect x="748.5" y="208.5" width="9" height="19" rx="3.6" ry="4.2" fill="url(#rd)" stroke="#a02636" stroke-width="1" shape-rendering="geometricPrecision"/>
<rect x="758" y="219" width="2" height="9" fill="#fddaa4"/>
<rect x="759.4" y="219" width="0.6000000000000227" height="9" fill="#e8bc82"/>
<rect x="760" y="214" width="2" height="14" fill="#86a0e8"/>
<rect x="760" y="214" width="0.7000000000000455" height="14" fill="#5878c8"/>
<rect x="762" y="219" width="2" height="9" fill="#f8646f"/>
<rect x="762" y="219" width="0.6000000000000227" height="9" fill="#e84656"/>
<rect x="764" y="221" width="2" height="7" fill="#fddaa4"/>
<rect x="765.4" y="221" width="0.6000000000000227" height="7" fill="#e8bc82"/>
<rect x="766" y="215" width="2" height="13" fill="#fddaa4"/>
<rect x="767.4" y="215" width="0.6000000000000227" height="13" fill="#e8bc82"/>
<rect x="768" y="209" width="2" height="19" fill="#86a0e8"/>
<rect x="768" y="209" width="0.7000000000000455" height="19" fill="#5878c8"/>
<rect x="770" y="208" width="8" height="20" fill="url(#rd)"/>
<rect x="778" y="214" width="2" height="14" fill="#fddaa4"/>
<rect x="779.4" y="214" width="0.6000000000000227" height="14" fill="#e8bc82"/>
<rect x="780" y="222" width="2" height="6" fill="#86a0e8"/>
<rect x="780" y="222" width="0.7000000000000455" height="6" fill="#5878c8"/>
<rect x="782" y="219" width="2" height="9" fill="#fddaa4"/>
<rect x="783.4" y="219" width="0.6000000000000227" height="9" fill="#e8bc82"/>
<rect x="784" y="216" width="2" height="12" fill="#f8646f"/>
<rect x="784" y="216" width="0.6000000000000227" height="12" fill="#e84656"/>
<rect x="786" y="219" width="2" height="9" fill="#f8646f"/>
<rect x="786" y="219" width="0.6000000000000227" height="9" fill="#e84656"/>
<rect x="788" y="214" width="2" height="14" fill="#fddaa4"/>
<rect x="789.4" y="214" width="0.6000000000000227" height="14" fill="#e8bc82"/>
<rect x="790.5" y="208.5" width="9" height="19" rx="3.6" ry="4.2" fill="url(#rd)" stroke="#a02636" stroke-width="1" shape-rendering="geometricPrecision"/>
<rect x="800" y="214" width="2" height="14" fill="#fddaa4"/>
<rect x="801.4" y="214" width="0.6000000000000227" height="14" fill="#e8bc82"/>
<rect x="802" y="216" width="2" height="12" fill="#86a0e8"/>
<rect x="802" y="216" width="0.7000000000000455" height="12" fill="#5878c8"/>
<rect x="804" y="220" width="2" height="8" fill="#f8646f"/>
<rect x="804" y="220" width="0.6000000000000227" height="8" fill="#e84656"/>
<rect x="806" y="222" width="2" height="6" fill="#fddaa4"/>
<rect x="807.4" y="222" width="0.6000000000000227" height="6" fill="#e8bc82"/>
<rect x="808" y="214" width="2" height="14" fill="#fddaa4"/>
<rect x="809.4" y="214" width="0.6000000000000227" height="14" fill="#e8bc82"/>
<rect x="810" y="209" width="2" height="19" fill="#86a0e8"/>
<rect x="810" y="209" width="0.7000000000000455" height="19" fill="#5878c8"/>
<rect x="812.5" y="208.5" width="9" height="19" rx="3.6" ry="4.2" fill="url(#rd)" stroke="#a02636" stroke-width="1" shape-rendering="geometricPrecision"/>
<rect x="822" y="218" width="2" height="10" fill="#fddaa4"/>
<rect x="823.4" y="218" width="0.6000000000000227" height="10" fill="#e8bc82"/>
<rect x="824" y="215" width="2" height="13" fill="#f8646f"/>
<rect x="824" y="215" width="0.6000000000000227" height="13" fill="#e84656"/>
<rect x="826" y="220" width="2" height="8" fill="#f8646f"/>
<rect x="826" y="220" width="0.6000000000000227" height="8" fill="#e84656"/>
<rect x="828" y="223" width="2" height="5" fill="#fddaa4"/>
<rect x="829.4" y="223" width="0.6000000000000227" height="5" fill="#e8bc82"/>
<rect x="830" y="214" width="2" height="14" fill="#fddaa4"/>
<rect x="831.4" y="214" width="0.6000000000000227" height="14" fill="#e8bc82"/>
<rect x="832" y="209" width="2" height="19" fill="#86a0e8"/>
<rect x="832" y="209" width="0.7000000000000455" height="19" fill="#5878c8"/>
<rect x="834" y="208" width="8" height="20" fill="url(#rd)"/>
<rect x="842" y="213" width="2" height="15" fill="#fddaa4"/>
<rect x="843.4" y="213" width="0.6000000000000227" height="15" fill="#e8bc82"/>
<rect x="844" y="217" width="2" height="11" fill="#86a0e8"/>
<rect x="844" y="217" width="0.7000000000000455" height="11" fill="#5878c8"/>
<rect x="846" y="225" width="2" height="3" fill="#f8646f"/>
<rect x="846" y="225" width="0.6000000000000227" height="3" fill="#e84656"/>
<rect x="848" y="218" width="2" height="10" fill="#fddaa4"/>
<rect x="849.4" y="218" width="0.6000000000000227" height="10" fill="#e8bc82"/>
<rect x="850" y="219" width="2" height="9" fill="#f8646f"/>
<rect x="850" y="219" width="0.6000000000000227" height="9" fill="#e84656"/>
<rect x="852" y="212" width="2" height="16" fill="#fddaa4"/>
<rect x="853.4" y="212" width="0.6000000000000227" height="16" fill="#e8bc82"/>
<rect x="854.5" y="208.5" width="9" height="19" rx="3.6" ry="4.2" fill="url(#rd)" stroke="#a02636" stroke-width="1" shape-rendering="geometricPrecision"/>
<rect x="864" y="216" width="2" height="12" fill="#fddaa4"/>
<rect x="865.4" y="216" width="0.6000000000000227" height="12" fill="#e8bc82"/>
<rect x="866" y="214" width="2" height="14" fill="#86a0e8"/>
<rect x="866" y="214" width="0.7000000000000455" height="14" fill="#5878c8"/>
<rect x="868" y="218" width="2" height="10" fill="#86a0e8"/>
<rect x="868" y="218" width="0.7000000000000455" height="10" fill="#5878c8"/>
<rect x="870" y="224" width="2" height="4" fill="#f8646f"/>
<rect x="870" y="224" width="0.6000000000000227" height="4" fill="#e84656"/>
<rect x="872" y="226" width="2" height="2" fill="#fddaa4"/>
<rect x="873.4" y="226" width="0.6000000000000227" height="2" fill="#e8bc82"/>
<rect x="874" y="213" width="2" height="15" fill="#f8646f"/>
<rect x="874" y="213" width="0.6000000000000227" height="15" fill="#e84656"/>
<rect x="874.5" y="209" width="2.0" height="19" fill="#86a0e8"/>
<rect x="874.5" y="209" width="0.7000000000000455" height="19" fill="#5878c8"/>
<rect x="876.5" y="208.5" width="9" height="19" rx="3.6" ry="4.2" fill="url(#rd)" stroke="#a02636" stroke-width="1" shape-rendering="geometricPrecision"/>
<rect x="886" y="222" width="2" height="6" fill="#fddaa4"/>
<rect x="887.4" y="222" width="0.6000000000000227" height="6" fill="#e8bc82"/>
<rect x="888" y="218" width="2" height="10" fill="#fddaa4"/>
<rect x="889.4" y="218" width="0.6000000000000227" height="10" fill="#e8bc82"/>
<rect x="890" y="216" width="2" height="12" fill="#f8646f"/>
<rect x="890" y="216" width="0.6000000000000227" height="12" fill="#e84656"/>
<rect x="892" y="219" width="2" height="9" fill="#f8646f"/>
<rect x="892" y="219" width="0.6000000000000227" height="9" fill="#e84656"/>
<rect x="894" y="213" width="2" height="15" fill="#fddaa4"/>
<rect x="895.4" y="213" width="0.6000000000000227" height="15" fill="#e8bc82"/>
<rect x="896" y="209" width="2" height="19" fill="#86a0e8"/>
<rect x="896" y="209" width="0.7000000000000455" height="19" fill="#5878c8"/>
<rect x="898" y="208" width="8" height="20" fill="url(#rd)"/>
<rect x="906" y="209" width="2" height="19" fill="#fddaa4"/>
<rect x="907.4" y="209" width="0.6000000000000227" height="19" fill="#e8bc82"/>
<rect x="908" y="223" width="2" height="5" fill="#fddaa4"/>
<rect x="909.4" y="223" width="0.6000000000000227" height="5" fill="#e8bc82"/>
<rect x="910" y="220" width="2" height="8" fill="#fddaa4"/>
<rect x="911.4" y="220" width="0.6000000000000227" height="8" fill="#e8bc82"/>
<rect x="912" y="216" width="2" height="12" fill="#f8646f"/>
<rect x="912" y="216" width="0.6000000000000227" height="12" fill="#e84656"/>
<rect x="914" y="219" width="2" height="9" fill="#f8646f"/>
<rect x="914" y="219" width="0.6000000000000227" height="9" fill="#e84656"/>
<rect x="916" y="213" width="2" height="15" fill="#fddaa4"/>
<rect x="917.4" y="213" width="0.6000000000000227" height="15" fill="#e8bc82"/>
<rect x="918.5" y="208.5" width="9" height="19" rx="3.6" ry="4.2" fill="url(#rd)" stroke="#a02636" stroke-width="1" shape-rendering="geometricPrecision"/>
<rect x="928" y="214" width="2" height="14" fill="#fddaa4"/>
<rect x="929.4" y="214" width="0.6000000000000227" height="14" fill="#e8bc82"/>
<rect x="930" y="216" width="2" height="12" fill="#86a0e8"/>
<rect x="930" y="216" width="0.7000000000000455" height="12" fill="#5878c8"/>
<rect x="932" y="221" width="2" height="7" fill="#f8646f"/>
<rect x="932" y="221" width="0.6000000000000227" height="7" fill="#e84656"/>
<rect x="934" y="223" width="2" height="5" fill="#fddaa4"/>
<rect x="935.4" y="223" width="0.6000000000000227" height="5" fill="#e8bc82"/>
<rect x="936" y="214" width="2" height="14" fill="#fddaa4"/>
<rect x="937.4" y="214" width="0.6000000000000227" height="14" fill="#e8bc82"/>
<rect x="938" y="209" width="2" height="19" fill="#86a0e8"/>
<rect x="938" y="209" width="0.7000000000000455" height="19" fill="#5878c8"/>
<rect x="940.5" y="208.5" width="9" height="19" rx="3.6" ry="4.2" fill="url(#rd)" stroke="#a02636" stroke-width="1" shape-rendering="geometricPrecision"/>
<rect x="950" y="222" width="2" height="6" fill="#fddaa4"/>
<rect x="951.4" y="222" width="0.6000000000000227" height="6" fill="#e8bc82"/>
<rect x="952" y="215" width="2" height="13" fill="#f8646f"/>
<rect x="952" y="215" width="0.6000000000000227" height="13" fill="#e84656"/>
<rect x="954" y="217" width="2" height="11" fill="#f8646f"/>
<rect x="954" y="217" width="0.6000000000000227" height="11" fill="#e84656"/>
<rect x="956" y="219" width="2" height="9" fill="#f8646f"/>
<rect x="956" y="219" width="0.6000000000000227" height="9" fill="#e84656"/>
<rect x="958" y="213" width="2" height="15" fill="#fddaa4"/>
<rect x="959.4" y="213" width="0.6000000000000227" height="15" fill="#e8bc82"/>
<rect x="960.5" y="208.5" width="9" height="19" rx="3.6" ry="4.2" fill="url(#rd)" stroke="#a02636" stroke-width="1" shape-rendering="geometricPrecision"/>
<rect x="970" y="215" width="2" height="13" fill="#fddaa4"/>
<rect x="971.4" y="215" width="0.6000000000000227" height="13" fill="#e8bc82"/>
<rect x="972" y="216" width="2" height="12" fill="#86a0e8"/>
<rect x="972" y="216" width="0.7000000000000455" height="12" fill="#5878c8"/>
<rect x="974" y="221" width="2" height="7" fill="#f8646f"/>
<rect x="974" y="221" width="0.6000000000000227" height="7" fill="#e84656"/>
<rect x="976" y="223" width="2" height="5" fill="#f8646f"/>
<rect x="976" y="223" width="0.6000000000000227" height="5" fill="#e84656"/>
<rect x="978" y="214" width="2" height="14" fill="#fddaa4"/>
<rect x="979.4" y="214" width="0.6000000000000227" height="14" fill="#e8bc82"/>
<rect x="980" y="209" width="2" height="19" fill="#86a0e8"/>
<rect x="980" y="209" width="0.7000000000000455" height="19" fill="#5878c8"/>
<rect x="982" y="208" width="8" height="20" fill="url(#rd)"/>
<rect x="990" y="209" width="2" height="19" fill="#fddaa4"/>
<rect x="991.4" y="209" width="0.6000000000000227" height="19" fill="#e8bc82"/>
<rect x="992" y="221" width="2" height="7" fill="#86a0e8"/>
<rect x="992" y="221" width="0.7000000000000455" height="7" fill="#5878c8"/>
<rect x="994" y="216" width="2" height="12" fill="#86a0e8"/>
<rect x="994" y="216" width="0.7000000000000455" height="12" fill="#5878c8"/>
<rect x="996" y="216" width="2" height="12" fill="#f8646f"/>
<rect x="996" y="216" width="0.6000000000000227" height="12" fill="#e84656"/>
<rect x="998" y="220" width="2" height="8" fill="#86a0e8"/>
<rect x="998" y="220" width="0.7000000000000455" height="8" fill="#5878c8"/>
<rect x="1000" y="225" width="2" height="3" fill="#f8646f"/>
<rect x="1000" y="225" width="0.6000000000000227" height="3" fill="#e84656"/>
<rect x="1002" y="209" width="2" height="19" fill="#86a0e8"/>
<rect x="1002" y="209" width="0.7000000000000455" height="19" fill="#5878c8"/>
<rect x="1004.5" y="208.5" width="9" height="19" rx="3.6" ry="4.2" fill="url(#rd)" stroke="#a02636" stroke-width="1" shape-rendering="geometricPrecision"/>
<rect x="1014" y="213" width="2" height="15" fill="#fddaa4"/>
<rect x="1015.4" y="213" width="0.6000000000000227" height="15" fill="#e8bc82"/>
<rect x="1016" y="221" width="2" height="7" fill="#86a0e8"/>
<rect x="1016" y="221" width="0.7000000000000455" height="7" fill="#5878c8"/>
<rect x="1018.5" y="208.5" width="13" height="19" rx="3.5" ry="4" fill="url(#pc)" stroke="#b89050" stroke-width="1" shape-rendering="geometricPrecision"/>
<rect x="1032" y="209" width="1.599999999999909" height="19" fill="#86a0e8"/>
<rect x="1032" y="209" width="0.7000000000000455" height="19" fill="#5878c8"/>
<rect x="1034" y="222" width="2" height="6" fill="#f8646f"/>
<rect x="1034" y="222" width="0.599999999999909" height="6" fill="#e84656"/>
<rect x="1036" y="219" width="2" height="9" fill="#f8646f"/>
<rect x="1036" y="219" width="0.599999999999909" height="9" fill="#e84656"/>
<rect x="1038" y="216" width="2" height="12" fill="#f8646f"/>
<rect x="1038" y="216" width="0.599999999999909" height="12" fill="#e84656"/>
<rect x="1040" y="212" width="2" height="16" fill="#f8646f"/>
<rect x="1040" y="212" width="0.599999999999909" height="16" fill="#e84656"/>
<rect x="1042" y="209" width="2" height="19" fill="#f8646f"/>
<rect x="1042" y="209" width="0.599999999999909" height="19" fill="#e84656"/>
<rect x="1044" y="208" width="2" height="20" fill="#f8646f"/>
<rect x="1044" y="208" width="0.599999999999909" height="20" fill="#e84656"/>
<rect x="551" y="208" width="11" height="20" fill="#3af6f8"/>
<rect x="551" y="208" width="3" height="13" fill="#b4ffff"/>
<rect x="554" y="208" width="1" height="20" fill="#8cfcfc"/>
<rect x="556" y="208" width="1" height="20" fill="#18dce2"/>
<rect x="558" y="208" width="1" height="13" fill="#9cfcfc"/>
<rect x="532" y="208" width="2" height="20" fill="#a8ffff"/>
<rect x="590" y="219" width="2" height="9" fill="#fddaa4"/>
<rect x="591.4" y="219" width="0.6000000000000227" height="9" fill="#e8bc82"/>
<rect x="592" y="222" width="2" height="6" fill="#fddaa4"/>
<rect x="593.4" y="222" width="0.6000000000000227" height="6" fill="#e8bc82"/>
<rect x="594" y="225" width="2" height="3" fill="#fddaa4"/>
<rect x="595.4" y="225" width="0.6000000000000227" height="3" fill="#e8bc82"/>
<path d="M702 311 L702 304 L703.5 303 L711 303 L713 305 L713 311 Z" fill="#6db5ee"/>
<rect x="700" y="309.6" width="3" height="1.3999999999999773" fill="#6db5ee"/>
<rect x="716" y="309.5" width="2" height="1.5" fill="#58a0e6"/>
<path d="M702 288 L702 281 L703.5 280 L711 280 L713 282 L713 288 Z" fill="#6db5ee"/>
<path d="M726 311 L726 305 L728 303 L734 303 L736 305 L737 309 L737 311 Z" fill="#6db5ee"/>
<rect x="724" y="309.6" width="3" height="1.3999999999999773" fill="#6db5ee"/>
<rect x="740" y="309.5" width="2" height="1.5" fill="#58a0e6"/>
<path d="M726 288 L726 282 L728 280 L734 280 L736 282 L737 286 L737 288 Z" fill="#6db5ee"/>
<rect x="746" y="303" width="11" height="8" fill="#6db5ee"/>
<rect x="744" y="309.6" width="3" height="1.3999999999999773" fill="#6db5ee"/>
<rect x="760" y="309.5" width="2" height="1.5" fill="#58a0e6"/>
<rect x="746" y="280" width="11" height="8" fill="#6db5ee"/>
<path d="M768 311 L768 304 L769.5 303 L777 303 L779 305 L779 311 Z" fill="#6db5ee"/>
<rect x="766" y="309.6" width="3" height="1.3999999999999773" fill="#6db5ee"/>
<rect x="782" y="309.5" width="2" height="1.5" fill="#58a0e6"/>
<path d="M768 288 L768 281 L769.5 280 L777 280 L779 282 L779 288 Z" fill="#6db5ee"/>
<path d="M790 311 L790 305 L792 303 L798 303 L800 305 L801 309 L801 311 Z" fill="#6db5ee"/>
<rect x="788" y="309.6" width="3" height="1.3999999999999773" fill="#6db5ee"/>
<rect x="804" y="309.5" width="2" height="1.5" fill="#58a0e6"/>
<path d="M790 288 L790 282 L792 280 L798 280 L800 282 L801 286 L801 288 Z" fill="#6db5ee"/>
<rect x="810" y="303" width="11" height="8" fill="#6db5ee"/>
<rect x="808" y="309.6" width="3" height="1.3999999999999773" fill="#6db5ee"/>
<rect x="824" y="309.5" width="2" height="1.5" fill="#58a0e6"/>
<rect x="810" y="280" width="11" height="8" fill="#6db5ee"/>
<path d="M832 311 L832 304 L833.5 303 L841 303 L843 305 L843 311 Z" fill="#6db5ee"/>
<rect x="830" y="309.6" width="3" height="1.3999999999999773" fill="#6db5ee"/>
<rect x="846" y="309.5" width="2" height="1.5" fill="#58a0e6"/>
<path d="M832 288 L832 281 L833.5 280 L841 280 L843 282 L843 288 Z" fill="#6db5ee"/>
<path d="M852 311 L852 305 L854 303 L858 303 L860 305 L861 309 L861 311 Z" fill="#6db5ee"/>
<rect x="850" y="309.6" width="3" height="1.3999999999999773" fill="#6db5ee"/>
<path d="M852 288 L852 282 L854 280 L858 280 L860 282 L861 286 L861 288 Z" fill="#6db5ee"/>
<rect x="874" y="303" width="11" height="8" fill="#6db5ee"/>
<rect x="872" y="309.6" width="3" height="1.3999999999999773" fill="#6db5ee"/>
<rect x="888" y="309.5" width="2" height="1.5" fill="#58a0e6"/>
<rect x="874" y="280" width="11" height="8" fill="#6db5ee"/>
<path d="M896 311 L896 304 L897.5 303 L905 303 L907 305 L907 311 Z" fill="#6db5ee"/>
<rect x="894" y="309.6" width="3" height="1.3999999999999773" fill="#6db5ee"/>
<rect x="910" y="309.5" width="2" height="1.5" fill="#58a0e6"/>
<path d="M896 288 L896 281 L897.5 280 L905 280 L907 282 L907 288 Z" fill="#6db5ee"/>
<path d="M916 311 L916 305 L918 303 L922 303 L924 305 L925 309 L925 311 Z" fill="#6db5ee"/>
<rect x="914" y="309.6" width="3" height="1.3999999999999773" fill="#6db5ee"/>
<path d="M916 288 L916 282 L918 280 L922 280 L924 282 L925 286 L925 288 Z" fill="#6db5ee"/>
<rect x="938" y="303" width="11" height="8" fill="#6db5ee"/>
<rect x="936" y="309.6" width="3" height="1.3999999999999773" fill="#6db5ee"/>
<rect x="952" y="309.5" width="2" height="1.5" fill="#58a0e6"/>
<rect x="938" y="280" width="11" height="8" fill="#6db5ee"/>
<path d="M960 311 L960 304 L961.5 303 L969 303 L971 305 L971 311 Z" fill="#6db5ee"/>
<rect x="958" y="309.6" width="3" height="1.3999999999999773" fill="#6db5ee"/>
<rect x="974" y="309.5" width="2" height="1.5" fill="#58a0e6"/>
<path d="M960 288 L960 281 L961.5 280 L969 280 L971 282 L971 288 Z" fill="#6db5ee"/>
<path d="M980 311 L980 305 L982 303 L988 303 L990 305 L991 309 L991 311 Z" fill="#6db5ee"/>
<rect x="978" y="309.6" width="3" height="1.3999999999999773" fill="#6db5ee"/>
<rect x="994" y="309.5" width="2" height="1.5" fill="#58a0e6"/>
<path d="M980 288 L980 282 L982 280 L988 280 L990 282 L991 286 L991 288 Z" fill="#6db5ee"/>
<rect x="1002" y="303" width="11" height="8" fill="#6db5ee"/>
<rect x="1000" y="309.6" width="3" height="1.3999999999999773" fill="#6db5ee"/>
<rect x="1016" y="309.5" width="2" height="1.5" fill="#58a0e6"/>
<rect x="1002" y="280" width="11" height="8" fill="#6db5ee"/>
<path d="M1034 288 L1036 284 L1039 281 L1046 280 L1046 288 Z" fill="#6db5ee"/>
<path d="M1038 311 L1040 304 L1046 303 L1046 311 Z" fill="#6db5ee"/>
<rect x="718" y="280" width="3" height="8" fill="#6db5ee"/>
<rect x="715" y="285" width="10" height="3" fill="#6db5ee"/>
<path d="M739 288 L741 284 L743 281 L744 284 L746 283 L746 288 Z" fill="#6db5ee"/>
<rect x="762" y="280" width="3" height="8" fill="#6db5ee"/>
<rect x="762" y="284" width="6" height="4" fill="#6db5ee"/>
<rect x="784" y="280" width="3" height="8" fill="#6db5ee"/>
<rect x="781" y="285" width="10" height="3" fill="#6db5ee"/>
<path d="M803 288 L805 284 L807 281 L808 284 L810 283 L810 288 Z" fill="#6db5ee"/>
<rect x="826" y="280" width="3" height="8" fill="#6db5ee"/>
<rect x="823" y="285" width="10" height="3" fill="#6db5ee"/>
<path d="M845 288 L847 284 L849 281 L850 284 L852 283 L852 288 Z" fill="#6db5ee"/>
<rect x="868" y="280" width="3" height="8" fill="#6db5ee"/>
<rect x="868" y="284" width="6" height="4" fill="#6db5ee"/>
<rect x="890" y="280" width="3" height="8" fill="#6db5ee"/>
<rect x="887" y="285" width="10" height="3" fill="#6db5ee"/>
<rect x="912" y="280" width="3" height="8" fill="#6db5ee"/>
<rect x="909" y="285" width="10" height="3" fill="#6db5ee"/>
<path d="M931 288 L933 284 L935 281 L936 284 L938 283 L938 288 Z" fill="#6db5ee"/>
<rect x="954" y="280" width="3" height="8" fill="#6db5ee"/>
<rect x="951" y="285" width="10" height="3" fill="#6db5ee"/>
<rect x="974" y="280" width="3" height="8" fill="#6db5ee"/>
<rect x="974" y="284" width="6" height="4" fill="#6db5ee"/>
<rect x="996" y="280" width="3" height="8" fill="#6db5ee"/>
<rect x="993" y="285" width="10" height="3" fill="#6db5ee"/>
<path d="M1033 288 L1035 284 L1037 281 L1038 284 L1040 283 L1040 288 Z" fill="#6db5ee"/>
<rect x="692" y="289" width="2" height="1" fill="#ff2030"/>
<rect x="700" y="289" width="2" height="1" fill="#ff2030"/>
<rect x="712" y="289" width="2" height="1" fill="#ff2030"/>
<rect x="720" y="289" width="6" height="1" fill="#ff2030"/>
<rect x="721" y="290" width="3" height="1" fill="#ff2030"/>
<rect x="736" y="289" width="2" height="1" fill="#ff2030"/>
<rect x="742" y="289" width="6" height="1" fill="#ff2030"/>
<rect x="743" y="290" width="3" height="1" fill="#ff2030"/>
<rect x="758" y="289" width="2" height="1" fill="#ff2030"/>
<rect x="762" y="289" width="8" height="1" fill="#ff2030"/>
<rect x="778" y="289" width="2" height="1" fill="#ff2030"/>
<rect x="784" y="289" width="6" height="1" fill="#ff2030"/>
<rect x="785" y="290" width="3" height="1" fill="#ff2030"/>
<rect x="800" y="289" width="2" height="1" fill="#ff2030"/>
<rect x="806" y="289" width="6" height="1" fill="#ff2030"/>
<rect x="820" y="289" width="2" height="1" fill="#ff2030"/>
<rect x="826" y="289" width="6" height="1" fill="#ff2030"/>
<rect x="827" y="290" width="3" height="1" fill="#ff2030"/>
<rect x="842" y="289" width="2" height="1" fill="#ff2030"/>
<rect x="848" y="289" width="6" height="1" fill="#ff2030"/>
<rect x="849" y="290" width="3" height="1" fill="#ff2030"/>
<rect x="864" y="289" width="2" height="1" fill="#ff2030"/>
<rect x="868" y="289" width="8" height="1" fill="#ff2030"/>
<rect x="886" y="289" width="2" height="1" fill="#ff2030"/>
<rect x="890" y="289" width="6" height="1" fill="#ff2030"/>
<rect x="891" y="290" width="3" height="1" fill="#ff2030"/>
<rect x="906" y="289" width="2" height="1" fill="#ff2030"/>
<rect x="912" y="289" width="6" height="1" fill="#ff2030"/>
<rect x="913" y="290" width="3" height="1" fill="#ff2030"/>
<rect x="928" y="289" width="2" height="1" fill="#ff2030"/>
<rect x="934" y="289" width="6" height="1" fill="#ff2030"/>
<rect x="950" y="289" width="2" height="1" fill="#ff2030"/>
<rect x="954" y="289" width="6" height="1" fill="#ff2030"/>
<rect x="955" y="290" width="3" height="1" fill="#ff2030"/>
<rect x="970" y="289" width="2" height="1" fill="#ff2030"/>
<rect x="976" y="289" width="6" height="1" fill="#ff2030"/>
<rect x="990" y="289" width="2" height="1" fill="#ff2030"/>
<rect x="996" y="289" width="6" height="1" fill="#ff2030"/>
<rect x="997" y="290" width="3" height="1" fill="#ff2030"/>
<rect x="1012" y="289" width="2" height="1" fill="#ff2030"/>
<rect x="1036" y="289" width="4" height="1" fill="#ff2030"/>
<rect x="1037" y="290" width="3" height="1" fill="#ff2030"/>
<rect x="700" y="312" width="2" height="1" fill="#ff2030"/>
<rect x="700" y="360.4" width="2" height="1.3" fill="#ff2030" shape-rendering="geometricPrecision"/>
<rect x="712" y="312" width="2" height="1" fill="#ff2030"/>
<rect x="712" y="360.4" width="2" height="1.3" fill="#ff2030" shape-rendering="geometricPrecision"/>
<rect x="724" y="312" width="2" height="1" fill="#ff2030"/>
<rect x="724" y="360.4" width="2" height="1.3" fill="#ff2030" shape-rendering="geometricPrecision"/>
<rect x="736" y="312" width="2" height="1" fill="#ff2030"/>
<rect x="736" y="360.4" width="2" height="1.3" fill="#ff2030" shape-rendering="geometricPrecision"/>
<rect x="744" y="312" width="2" height="1" fill="#ff2030"/>
<rect x="744" y="360.4" width="2" height="1.3" fill="#ff2030" shape-rendering="geometricPrecision"/>
<rect x="756" y="312" width="2" height="1" fill="#ff2030"/>
<rect x="756" y="360.4" width="2" height="1.3" fill="#ff2030" shape-rendering="geometricPrecision"/>
<rect x="766" y="312" width="2" height="1" fill="#ff2030"/>
<rect x="766" y="360.4" width="2" height="1.3" fill="#ff2030" shape-rendering="geometricPrecision"/>
<rect x="778" y="312" width="2" height="1" fill="#ff2030"/>
<rect x="778" y="360.4" width="2" height="1.3" fill="#ff2030" shape-rendering="geometricPrecision"/>
<rect x="788" y="312" width="2" height="1" fill="#ff2030"/>
<rect x="788" y="360.4" width="2" height="1.3" fill="#ff2030" shape-rendering="geometricPrecision"/>
<rect x="800" y="312" width="2" height="1" fill="#ff2030"/>
<rect x="800" y="360.4" width="2" height="1.3" fill="#ff2030" shape-rendering="geometricPrecision"/>
<rect x="808" y="312" width="2" height="1" fill="#ff2030"/>
<rect x="808" y="360.4" width="2" height="1.3" fill="#ff2030" shape-rendering="geometricPrecision"/>
<rect x="820" y="312" width="2" height="1" fill="#ff2030"/>
<rect x="820" y="360.4" width="2" height="1.3" fill="#ff2030" shape-rendering="geometricPrecision"/>
<rect x="830" y="312" width="2" height="1" fill="#ff2030"/>
<rect x="830" y="360.4" width="2" height="1.3" fill="#ff2030" shape-rendering="geometricPrecision"/>
<rect x="842" y="312" width="2" height="1" fill="#ff2030"/>
<rect x="842" y="360.4" width="2" height="1.3" fill="#ff2030" shape-rendering="geometricPrecision"/>
<rect x="850" y="312" width="2" height="1" fill="#ff2030"/>
<rect x="850" y="360.4" width="2" height="1.3" fill="#ff2030" shape-rendering="geometricPrecision"/>
<rect x="862" y="312" width="2" height="1" fill="#ff2030"/>
<rect x="862" y="360.4" width="2" height="1.3" fill="#ff2030" shape-rendering="geometricPrecision"/>
<rect x="872" y="312" width="2" height="1" fill="#ff2030"/>
<rect x="872" y="360.4" width="2" height="1.3" fill="#ff2030" shape-rendering="geometricPrecision"/>
<rect x="884" y="312" width="2" height="1" fill="#ff2030"/>
<rect x="884" y="360.4" width="2" height="1.3" fill="#ff2030" shape-rendering="geometricPrecision"/>
<rect x="894" y="312" width="2" height="1" fill="#ff2030"/>
<rect x="894" y="360.4" width="2" height="1.3" fill="#ff2030" shape-rendering="geometricPrecision"/>
<rect x="906" y="312" width="2" height="1" fill="#ff2030"/>
<rect x="906" y="360.4" width="2" height="1.3" fill="#ff2030" shape-rendering="geometricPrecision"/>
<rect x="914" y="312" width="2" height="1" fill="#ff2030"/>
<rect x="914" y="360.4" width="2" height="1.3" fill="#ff2030" shape-rendering="geometricPrecision"/>
<rect x="926" y="312" width="2" height="1" fill="#ff2030"/>
<rect x="926" y="360.4" width="2" height="1.3" fill="#ff2030" shape-rendering="geometricPrecision"/>
<rect x="936" y="312" width="2" height="1" fill="#ff2030"/>
<rect x="936" y="360.4" width="2" height="1.3" fill="#ff2030" shape-rendering="geometricPrecision"/>
<rect x="948" y="312" width="2" height="1" fill="#ff2030"/>
<rect x="948" y="360.4" width="2" height="1.3" fill="#ff2030" shape-rendering="geometricPrecision"/>
<rect x="958" y="312" width="2" height="1" fill="#ff2030"/>
<rect x="958" y="360.4" width="2" height="1.3" fill="#ff2030" shape-rendering="geometricPrecision"/>
<rect x="970" y="312" width="2" height="1" fill="#ff2030"/>
<rect x="970" y="360.4" width="2" height="1.3" fill="#ff2030" shape-rendering="geometricPrecision"/>
<rect x="978" y="312" width="2" height="1" fill="#ff2030"/>
<rect x="978" y="360.4" width="2" height="1.3" fill="#ff2030" shape-rendering="geometricPrecision"/>
<rect x="990" y="312" width="2" height="1" fill="#ff2030"/>
<rect x="990" y="360.4" width="2" height="1.3" fill="#ff2030" shape-rendering="geometricPrecision"/>
<rect x="1000" y="312" width="2" height="1" fill="#ff2030"/>
<rect x="1000" y="360.4" width="2" height="1.3" fill="#ff2030" shape-rendering="geometricPrecision"/>
<rect x="1012" y="312" width="2" height="1" fill="#ff2030"/>
<rect x="1012" y="360.4" width="2" height="1.3" fill="#ff2030" shape-rendering="geometricPrecision"/>
<rect x="1038" y="312" width="2" height="1" fill="#ff2030"/>
<rect x="1038" y="360.4" width="2" height="1.3" fill="#ff2030" shape-rendering="geometricPrecision"/>
<rect x="692" y="289" width="2" height="1" fill="#ff2030"/>
<rect x="702" y="325" width="8" height="20" fill="url(#kb)"/>
<rect x="709.2" y="325" width="0.7999999999999545" height="20" fill="#9a9aa4"/>
<rect x="710" y="336" width="4" height="9" fill="url(#kb)"/>
<rect x="713.3" y="336" width="0.7000000000000455" height="9" fill="#9a9aa4"/>
<rect x="716" y="343.5" width="2" height="1.5" fill="#5c7ed0"/>
<rect x="726" y="325" width="8" height="20" fill="url(#kb)"/>
<rect x="733.2" y="325" width="0.7999999999999545" height="20" fill="#9a9aa4"/>
<rect x="734" y="336" width="4" height="9" fill="url(#kb)"/>
<rect x="737.3" y="336" width="0.7000000000000455" height="9" fill="#9a9aa4"/>
<rect x="740" y="343.5" width="2" height="1.5" fill="#5c7ed0"/>
<rect x="746" y="325" width="8" height="20" fill="url(#kb)"/>
<rect x="753.2" y="325" width="0.7999999999999545" height="20" fill="#9a9aa4"/>
<rect x="754" y="336" width="4" height="9" fill="url(#kb)"/>
<rect x="757.3" y="336" width="0.7000000000000455" height="9" fill="#9a9aa4"/>
<rect x="760" y="343.5" width="2" height="1.5" fill="#5c7ed0"/>
<rect x="768" y="325" width="8" height="20" fill="url(#kb)"/>
<rect x="775.2" y="325" width="0.7999999999999545" height="20" fill="#9a9aa4"/>
<rect x="776" y="336" width="4" height="9" fill="url(#kb)"/>
<rect x="779.3" y="336" width="0.7000000000000455" height="9" fill="#9a9aa4"/>
<rect x="782" y="343.5" width="2" height="1.5" fill="#5c7ed0"/>
<rect x="790" y="325" width="8" height="20" fill="url(#kb)"/>
<rect x="797.2" y="325" width="0.7999999999999545" height="20" fill="#9a9aa4"/>
<rect x="798" y="336" width="4" height="9" fill="url(#kb)"/>
<rect x="801.3" y="336" width="0.7000000000000455" height="9" fill="#9a9aa4"/>
<rect x="804" y="343.5" width="2" height="1.5" fill="#5c7ed0"/>
<rect x="810" y="325" width="8" height="20" fill="url(#kb)"/>
<rect x="817.2" y="325" width="0.7999999999999545" height="20" fill="#9a9aa4"/>
<rect x="818" y="336" width="4" height="9" fill="url(#kb)"/>
<rect x="821.3" y="336" width="0.7000000000000455" height="9" fill="#9a9aa4"/>
<rect x="824" y="343.5" width="2" height="1.5" fill="#5c7ed0"/>
<rect x="832" y="325" width="8" height="20" fill="url(#kb)"/>
<rect x="839.2" y="325" width="0.7999999999999545" height="20" fill="#9a9aa4"/>
<rect x="840" y="336" width="4" height="9" fill="url(#kb)"/>
<rect x="843.3" y="336" width="0.7000000000000455" height="9" fill="#9a9aa4"/>
<rect x="846" y="343.5" width="2" height="1.5" fill="#5c7ed0"/>
<rect x="852.5" y="325.5" width="9" height="19" rx="3" ry="4" fill="url(#kb)" stroke="#2c3e78" stroke-width="1" shape-rendering="geometricPrecision"/>
<rect x="866" y="343.5" width="2" height="1.5" fill="#5c7ed0"/>
<rect x="874" y="325" width="8" height="20" fill="url(#kb)"/>
<rect x="881.2" y="325" width="0.7999999999999545" height="20" fill="#9a9aa4"/>
<rect x="882" y="336" width="4" height="9" fill="url(#kb)"/>
<rect x="885.3" y="336" width="0.7000000000000455" height="9" fill="#9a9aa4"/>
<rect x="888" y="343.5" width="2" height="1.5" fill="#5c7ed0"/>
<rect x="896" y="325" width="8" height="20" fill="url(#kb)"/>
<rect x="903.2" y="325" width="0.7999999999999545" height="20" fill="#9a9aa4"/>
<rect x="904" y="336" width="4" height="9" fill="url(#kb)"/>
<rect x="907.3" y="336" width="0.7000000000000455" height="9" fill="#9a9aa4"/>
<rect x="910" y="343.5" width="2" height="1.5" fill="#5c7ed0"/>
<rect x="916.5" y="325.5" width="9" height="19" rx="3" ry="4" fill="url(#kb)" stroke="#2c3e78" stroke-width="1" shape-rendering="geometricPrecision"/>
<rect x="926" y="336" width="4" height="9" fill="url(#kb)"/>
<rect x="930" y="343.5" width="2" height="1.5" fill="#5c7ed0"/>
<rect x="938" y="325" width="8" height="20" fill="url(#kb)"/>
<rect x="945.2" y="325" width="0.7999999999999545" height="20" fill="#9a9aa4"/>
<rect x="946" y="336" width="4" height="9" fill="url(#kb)"/>
<rect x="949.3" y="336" width="0.7000000000000455" height="9" fill="#9a9aa4"/>
<rect x="952" y="343.5" width="2" height="1.5" fill="#5c7ed0"/>
<rect x="960" y="325" width="8" height="20" fill="url(#kb)"/>
<rect x="967.2" y="325" width="0.7999999999999545" height="20" fill="#9a9aa4"/>
<rect x="968" y="336" width="4" height="9" fill="url(#kb)"/>
<rect x="971.3" y="336" width="0.7000000000000455" height="9" fill="#9a9aa4"/>
<rect x="974" y="343.5" width="2" height="1.5" fill="#5c7ed0"/>
<rect x="980" y="325" width="8" height="20" fill="url(#kb)"/>
<rect x="987.2" y="325" width="0.7999999999999545" height="20" fill="#9a9aa4"/>
<rect x="988" y="336" width="4" height="9" fill="url(#kb)"/>
<rect x="991.3" y="336" width="0.7000000000000455" height="9" fill="#9a9aa4"/>
<rect x="994" y="343.5" width="2" height="1.5" fill="#5c7ed0"/>
<rect x="1002" y="325" width="8" height="20" fill="url(#kb)"/>
<rect x="1009.2" y="325" width="0.7999999999999545" height="20" fill="#9a9aa4"/>
<rect x="1010" y="336" width="4" height="9" fill="url(#kb)"/>
<rect x="1013.3" y="336" width="0.7000000000000455" height="9" fill="#9a9aa4"/>
<rect x="1016" y="343.5" width="2" height="1.5" fill="#5c7ed0"/>
<rect x="1040" y="325" width="6" height="20" fill="url(#kb)"/>
<rect x="1045.2" y="325" width="0.7999999999999545" height="20" fill="#9a9aa4"/>
<rect x="1028" y="343.5" width="2" height="1.5" fill="#5c7ed0"/>
<rect x="1028" y="309.5" width="2" height="1.5" fill="#58a0e6"/>
<rect x="716" y="394" width="8" height="20" fill="url(#kb)"/>
<rect x="723.2" y="394" width="0.7999999999999545" height="20" fill="#a2a2aa"/>
<rect x="716" y="417" width="8" height="20" fill="url(#kb)"/>
<rect x="723.2" y="417" width="0.7999999999999545" height="20" fill="#a2a2aa"/>
<rect x="716" y="440" width="8" height="20" fill="url(#kb)"/>
<rect x="723.2" y="440" width="0.7999999999999545" height="20" fill="#a2a2aa"/>
<rect x="718" y="372" width="4" height="8" fill="#6db5ee"/>
<rect x="716" y="378.6" width="8" height="1.3999999999999773" fill="#6db5ee"/>
<rect x="740" y="394" width="6" height="20" fill="url(#kb)"/>
<rect x="745.2" y="394" width="0.7999999999999545" height="20" fill="#a2a2aa"/>
<rect x="740" y="417" width="6" height="20" fill="url(#kb)"/>
<rect x="745.2" y="417" width="0.7999999999999545" height="20" fill="#a2a2aa"/>
<rect x="740" y="440" width="6" height="20" fill="url(#kb)"/>
<rect x="745.2" y="440" width="0.7999999999999545" height="20" fill="#a2a2aa"/>
<path d="M740 380 L740 375 L742.5 373.5 L743 372 L744 374 L746 374 L746 380 Z" fill="#6db5ee"/>
<rect x="762" y="394" width="6" height="20" fill="url(#kb)"/>
<rect x="767.2" y="394" width="0.7999999999999545" height="20" fill="#a2a2aa"/>
<rect x="762" y="417" width="6" height="20" fill="url(#kb)"/>
<rect x="767.2" y="417" width="0.7999999999999545" height="20" fill="#a2a2aa"/>
<rect x="762" y="440" width="6" height="20" fill="url(#kb)"/>
<rect x="767.2" y="440" width="0.7999999999999545" height="20" fill="#a2a2aa"/>
<rect x="762" y="372" width="3" height="8" fill="#6db5ee"/>
<rect x="762" y="375" width="6" height="5" fill="#6db5ee"/>
<rect x="782" y="394" width="8" height="20" fill="url(#kb)"/>
<rect x="789.2" y="394" width="0.7999999999999545" height="20" fill="#a2a2aa"/>
<rect x="782" y="417" width="8" height="20" fill="url(#kb)"/>
<rect x="789.2" y="417" width="0.7999999999999545" height="20" fill="#a2a2aa"/>
<rect x="782" y="440" width="8" height="20" fill="url(#kb)"/>
<rect x="789.2" y="440" width="0.7999999999999545" height="20" fill="#a2a2aa"/>
<rect x="784" y="372" width="4" height="8" fill="#6db5ee"/>
<rect x="782" y="378.6" width="8" height="1.3999999999999773" fill="#6db5ee"/>
<rect x="804" y="394" width="6" height="20" fill="url(#kb)"/>
<rect x="809.2" y="394" width="0.7999999999999545" height="20" fill="#a2a2aa"/>
<rect x="804" y="417" width="6" height="20" fill="url(#kb)"/>
<rect x="809.2" y="417" width="0.7999999999999545" height="20" fill="#a2a2aa"/>
<rect x="804" y="440" width="6" height="20" fill="url(#kb)"/>
<rect x="809.2" y="440" width="0.7999999999999545" height="20" fill="#a2a2aa"/>
<path d="M804 380 L804 375 L806.5 373.5 L807 372 L808 374 L810 374 L810 380 Z" fill="#6db5ee"/>
<rect x="824" y="394" width="8" height="20" fill="url(#kb)"/>
<rect x="831.2" y="394" width="0.7999999999999545" height="20" fill="#a2a2aa"/>
<rect x="824" y="417" width="8" height="20" fill="url(#kb)"/>
<rect x="831.2" y="417" width="0.7999999999999545" height="20" fill="#a2a2aa"/>
<rect x="824" y="440" width="8" height="20" fill="url(#kb)"/>
<rect x="831.2" y="440" width="0.7999999999999545" height="20" fill="#a2a2aa"/>
<rect x="826" y="372" width="4" height="8" fill="#6db5ee"/>
<rect x="824" y="378.6" width="8" height="1.3999999999999773" fill="#6db5ee"/>
<rect x="846" y="394" width="6" height="20" fill="url(#kb)"/>
<rect x="851.2" y="394" width="0.7999999999999545" height="20" fill="#a2a2aa"/>
<rect x="846" y="417" width="6" height="20" fill="url(#kb)"/>
<rect x="851.2" y="417" width="0.7999999999999545" height="20" fill="#a2a2aa"/>
<rect x="846" y="440" width="6" height="20" fill="url(#kb)"/>
<rect x="851.2" y="440" width="0.7999999999999545" height="20" fill="#a2a2aa"/>
<path d="M846 380 L846 375 L848.5 373.5 L849 372 L850 374 L852 374 L852 380 Z" fill="#6db5ee"/>
<rect x="868" y="394" width="6" height="20" fill="url(#kb)"/>
<rect x="873.2" y="394" width="0.7999999999999545" height="20" fill="#a2a2aa"/>
<rect x="868" y="417" width="6" height="20" fill="url(#kb)"/>
<rect x="873.2" y="417" width="0.7999999999999545" height="20" fill="#a2a2aa"/>
<rect x="868" y="440" width="6" height="20" fill="url(#kb)"/>
<rect x="873.2" y="440" width="0.7999999999999545" height="20" fill="#a2a2aa"/>
<rect x="868" y="372" width="3" height="8" fill="#6db5ee"/>
<rect x="868" y="375" width="6" height="5" fill="#6db5ee"/>
<rect x="888" y="394" width="8" height="20" fill="url(#kb)"/>
<rect x="895.2" y="394" width="0.7999999999999545" height="20" fill="#a2a2aa"/>
<rect x="888" y="417" width="8" height="20" fill="url(#kb)"/>
<rect x="895.2" y="417" width="0.7999999999999545" height="20" fill="#a2a2aa"/>
<rect x="888" y="440" width="8" height="20" fill="url(#kb)"/>
<rect x="895.2" y="440" width="0.7999999999999545" height="20" fill="#a2a2aa"/>
<rect x="890" y="372" width="4" height="8" fill="#6db5ee"/>
<rect x="888" y="378.6" width="8" height="1.3999999999999773" fill="#6db5ee"/>
<rect x="910" y="394" width="8" height="20" fill="url(#kb)"/>
<rect x="917.2" y="394" width="0.7999999999999545" height="20" fill="#a2a2aa"/>
<rect x="910" y="417" width="8" height="20" fill="url(#kb)"/>
<rect x="917.2" y="417" width="0.7999999999999545" height="20" fill="#a2a2aa"/>
<rect x="910" y="440" width="8" height="20" fill="url(#kb)"/>
<rect x="917.2" y="440" width="0.7999999999999545" height="20" fill="#a2a2aa"/>
<rect x="912" y="372" width="4" height="8" fill="#6db5ee"/>
<rect x="910" y="378.6" width="8" height="1.3999999999999773" fill="#6db5ee"/>
<rect x="932" y="394" width="6" height="20" fill="url(#kb)"/>
<rect x="937.2" y="394" width="0.7999999999999545" height="20" fill="#a2a2aa"/>
<rect x="932" y="417" width="6" height="20" fill="url(#kb)"/>
<rect x="937.2" y="417" width="0.7999999999999545" height="20" fill="#a2a2aa"/>
<rect x="932" y="440" width="6" height="20" fill="url(#kb)"/>
<rect x="937.2" y="440" width="0.7999999999999545" height="20" fill="#a2a2aa"/>
<path d="M932 380 L932 375 L934.5 373.5 L935 372 L936 374 L938 374 L938 380 Z" fill="#6db5ee"/>
<rect x="952" y="394" width="8" height="20" fill="url(#kb)"/>
<rect x="959.2" y="394" width="0.7999999999999545" height="20" fill="#a2a2aa"/>
<rect x="952" y="417" width="8" height="20" fill="url(#kb)"/>
<rect x="959.2" y="417" width="0.7999999999999545" height="20" fill="#a2a2aa"/>
<rect x="952" y="440" width="8" height="20" fill="url(#kb)"/>
<rect x="959.2" y="440" width="0.7999999999999545" height="20" fill="#a2a2aa"/>
<rect x="954" y="372" width="4" height="8" fill="#6db5ee"/>
<rect x="952" y="378.6" width="8" height="1.3999999999999773" fill="#6db5ee"/>
<rect x="974" y="394" width="6" height="20" fill="url(#kb)"/>
<rect x="979.2" y="394" width="0.7999999999999545" height="20" fill="#a2a2aa"/>
<rect x="974" y="417" width="6" height="20" fill="url(#kb)"/>
<rect x="979.2" y="417" width="0.7999999999999545" height="20" fill="#a2a2aa"/>
<rect x="974" y="440" width="6" height="20" fill="url(#kb)"/>
<rect x="979.2" y="440" width="0.7999999999999545" height="20" fill="#a2a2aa"/>
<rect x="974" y="372" width="3" height="8" fill="#6db5ee"/>
<rect x="974" y="375" width="6" height="5" fill="#6db5ee"/>
<rect x="994" y="394" width="8" height="20" fill="url(#kb)"/>
<rect x="1001.2" y="394" width="0.7999999999999545" height="20" fill="#a2a2aa"/>
<rect x="994" y="417" width="8" height="20" fill="url(#kb)"/>
<rect x="1001.2" y="417" width="0.7999999999999545" height="20" fill="#a2a2aa"/>
<rect x="994" y="440" width="8" height="20" fill="url(#kb)"/>
<rect x="1001.2" y="440" width="0.7999999999999545" height="20" fill="#a2a2aa"/>
<rect x="996" y="372" width="4" height="8" fill="#6db5ee"/>
<rect x="994" y="378.6" width="8" height="1.3999999999999773" fill="#6db5ee"/>
<rect x="1034" y="394" width="6" height="20" fill="url(#kb)"/>
<rect x="1039.2" y="394" width="0.7999999999999545" height="20" fill="#a2a2aa"/>
<rect x="1034" y="417" width="6" height="20" fill="url(#kb)"/>
<rect x="1039.2" y="417" width="0.7999999999999545" height="20" fill="#a2a2aa"/>
<rect x="1034" y="440" width="6" height="20" fill="url(#kb)"/>
<rect x="1039.2" y="440" width="0.7999999999999545" height="20" fill="#a2a2aa"/>
<path d="M1034 380 L1034 375 L1036.5 373.5 L1037 372 L1038 374 L1040 374 L1040 380 Z" fill="#6db5ee"/>
<rect x="720" y="473" width="4" height="2" fill="#ff1a2a"/>
<rect x="720" y="498" width="4" height="2" fill="#ff1a2a"/>
<rect x="720" y="525" width="1.6000000000000227" height="4" fill="#a0a0a0"/>
<rect x="722.2" y="525" width="1.7999999999999545" height="4" fill="#b0b0b0"/>
<rect x="742" y="473" width="4" height="2" fill="#ff1a2a"/>
<rect x="742" y="498" width="4" height="2" fill="#ff1a2a"/>
<rect x="742" y="525" width="1.6000000000000227" height="4" fill="#a0a0a0"/>
<rect x="744.2" y="525" width="1.7999999999999545" height="4" fill="#b0b0b0"/>
<rect x="762" y="473" width="6" height="1" fill="#ff1a2a"/>
<rect x="766" y="473" width="2" height="2" fill="#ff1a2a"/>
<rect x="762" y="499" width="6" height="1" fill="#ff1a2a"/>
<rect x="766" y="498" width="2" height="2" fill="#ff1a2a"/>
<rect x="762" y="527" width="4" height="2" fill="#adadad"/>
<rect x="766" y="525" width="2" height="4" fill="#a0a0a0"/>
<rect x="784" y="473" width="6" height="1" fill="#ff1a2a"/>
<rect x="784" y="473" width="2" height="2" fill="#ff1a2a"/>
<rect x="784" y="499" width="6" height="1" fill="#ff1a2a"/>
<rect x="784" y="498" width="2" height="2" fill="#ff1a2a"/>
<rect x="784" y="525" width="1.6000000000000227" height="4" fill="#a0a0a0"/>
<rect x="786" y="527" width="4" height="2" fill="#adadad"/>
<rect x="806" y="473" width="4" height="1" fill="#ff1a2a"/>
<rect x="808" y="473" width="2" height="2" fill="#ff1a2a"/>
<rect x="806" y="499" width="4" height="1" fill="#ff1a2a"/>
<rect x="808" y="498" width="2" height="2" fill="#ff1a2a"/>
<rect x="806" y="527" width="2" height="2" fill="#adadad"/>
<rect x="808" y="525" width="2" height="4" fill="#a0a0a0"/>
<rect x="826" y="473" width="6" height="1" fill="#ff1a2a"/>
<rect x="826" y="473" width="2" height="2" fill="#ff1a2a"/>
<rect x="826" y="499" width="6" height="1" fill="#ff1a2a"/>
<rect x="826" y="498" width="2" height="2" fill="#ff1a2a"/>
<rect x="826" y="525" width="1.6000000000000227" height="4" fill="#a0a0a0"/>
<rect x="828" y="527" width="4" height="2" fill="#adadad"/>
<rect x="848" y="473" width="4" height="2" fill="#ff1a2a"/>
<rect x="848" y="498" width="4" height="2" fill="#ff1a2a"/>
<rect x="848" y="525" width="1.6000000000000227" height="4" fill="#a0a0a0"/>
<rect x="850.2" y="525" width="1.7999999999999545" height="4" fill="#b0b0b0"/>
<rect x="868" y="473" width="6" height="1" fill="#ff1a2a"/>
<rect x="868" y="499" width="6" height="1" fill="#ff1a2a"/>
<rect x="868" y="525" width="1.6000000000000227" height="4" fill="#a0a0a0"/>
<rect x="870" y="527" width="4" height="2" fill="#adadad"/>
<rect x="890" y="473" width="4" height="2" fill="#ff1a2a"/>
<rect x="890" y="498" width="4" height="2" fill="#ff1a2a"/>
<rect x="890" y="525" width="1.6000000000000227" height="4" fill="#a0a0a0"/>
<rect x="892.2" y="525" width="1.7999999999999545" height="4" fill="#b0b0b0"/>
<rect x="912" y="473" width="4" height="2" fill="#ff1a2a"/>
<rect x="912" y="498" width="4" height="2" fill="#ff1a2a"/>
<rect x="912" y="525" width="1.6000000000000227" height="4" fill="#a0a0a0"/>
<rect x="914.2" y="525" width="1.7999999999999545" height="4" fill="#b0b0b0"/>
<rect x="934" y="473" width="4" height="1" fill="#ff1a2a"/>
<rect x="934" y="473" width="2" height="2" fill="#ff1a2a"/>
<rect x="934" y="499" width="4" height="1" fill="#ff1a2a"/>
<rect x="934" y="498" width="2" height="2" fill="#ff1a2a"/>
<rect x="934" y="525" width="1.6000000000000227" height="4" fill="#a0a0a0"/>
<rect x="936" y="527" width="2" height="2" fill="#adadad"/>
<rect x="954" y="473" width="4" height="1" fill="#ff1a2a"/>
<rect x="956" y="473" width="2" height="2" fill="#ff1a2a"/>
<rect x="954" y="499" width="4" height="1" fill="#ff1a2a"/>
<rect x="956" y="498" width="2" height="2" fill="#ff1a2a"/>
<rect x="954" y="527" width="2" height="2" fill="#adadad"/>
<rect x="956" y="525" width="2" height="4" fill="#a0a0a0"/>
<rect x="976" y="473" width="4" height="1" fill="#ff1a2a"/>
<rect x="976" y="499" width="4" height="1" fill="#ff1a2a"/>
<rect x="976" y="525" width="1.6000000000000227" height="4" fill="#a0a0a0"/>
<rect x="978" y="527" width="2" height="2" fill="#adadad"/>
<rect x="996" y="473" width="6" height="1" fill="#ff1a2a"/>
<rect x="996" y="473" width="2" height="2" fill="#ff1a2a"/>
<rect x="996" y="499" width="6" height="1" fill="#ff1a2a"/>
<rect x="996" y="498" width="2" height="2" fill="#ff1a2a"/>
<rect x="996" y="525" width="1.6000000000000227" height="4" fill="#a0a0a0"/>
<rect x="998" y="527" width="4" height="2" fill="#adadad"/>
<rect x="1036" y="473" width="4" height="1" fill="#ff1a2a"/>
<rect x="1038" y="473" width="2" height="2" fill="#ff1a2a"/>
<rect x="1036" y="499" width="4" height="1" fill="#ff1a2a"/>
<rect x="1038" y="498" width="2" height="2" fill="#ff1a2a"/>
<rect x="1036" y="527" width="2" height="2" fill="#adadad"/>
<rect x="1038" y="525" width="2" height="4" fill="#a0a0a0"/>
<rect x="692" y="473" width="2" height="1" fill="#ff1a2a"/>
<rect x="692" y="499" width="2" height="1" fill="#ff1a2a"/>
<rect x="692" y="509" width="1.6000000000000227" height="20" fill="#8a8a8a"/>
<rect x="693.4" y="509" width="0.6000000000000227" height="20" fill="#c8c8c8"/>
<rect x="553" y="289" width="4" height="8" fill="#a4f8fb"/>
<rect x="559" y="289" width="4" height="8" fill="#a4f8fb"/>
<rect x="553" y="542" width="4" height="8" fill="#98f6fa"/>
<rect x="559" y="542" width="4" height="8" fill="#98f6fa"/>
<rect x="553" y="542" width="4" height="1" fill="#40e4ec"/>
<rect x="559" y="542" width="4" height="1" fill="#40e4ec"/>
<rect x="553" y="562" width="4" height="8" fill="#98f6fa"/>
<rect x="559" y="562" width="4" height="8" fill="#98f6fa"/>
<rect x="553" y="562" width="4" height="1" fill="#40e4ec"/>
<rect x="559" y="562" width="4" height="1" fill="#40e4ec"/>
<rect x="554" y="578" width="8" height="20" fill="url(#cy)"/></svg>
<div style="left:214px;top:185px;width:348px;height:20px;background:linear-gradient(#00f4f4,#2affff);border-top:1px solid #008a8a;border-bottom:1px solid #009a9a;border-right:1px solid #00a0a0;border-radius:0 4px 4px 0;-webkit-mask-image:linear-gradient(90deg,transparent 0px,#000 14px);mask-image:linear-gradient(90deg,transparent 0px,#000 14px);"></div><div class="bt" style="left:214px;top:185px;width:348px;height:20px;line-height:20px;font-size:11px;letter-spacing:0.04px;color:#1a1a1a;">MPI_Sendrecv [52.485 ms]</div><div style="left:214px;top:208px;width:318px;height:20px;background:linear-gradient(#00f4f4,#2affff);border-top:1px solid #008a8a;border-bottom:1px solid #009a9a;border-right:1px solid #00a0a0;border-radius:0 4px 4px 0;-webkit-mask-image:linear-gradient(90deg,transparent 0px,#000 14px);mask-image:linear-gradient(90deg,transparent 0px,#000 14px);"></div><div class="bt" style="left:214px;top:208px;width:318px;height:20px;line-height:19px;font-size:11px;letter-spacing:0.05px;color:#1a1a1a;">cuMemHostRegister</div><div class="bt" style="left:534px;top:208px;width:16px;height:20px;line-height:18px;font-size:11px;background:linear-gradient(#00f4f4,#2affff);border:1px solid #009a9a;border-radius:4px;color:#1a1a1a;">...</div><div class="bt" style="left:562px;top:185px;width:136px;height:20px;line-height:18px;font-size:11px;background:linear-gradient(#a9a9a9,#8b8b8b);border:1px solid #5c5c5c;border-radius:4px;color:#1c1c1c;text-align:left;padding-left:2px;letter-spacing:0.1px;">MPI_Sendrecv [1.341 ...</div><div class="bt" style="left:564px;top:208px;width:26px;height:20px;line-height:18px;font-size:11px;background:linear-gradient(#ffdca6,#fbc878);border:1px solid #c49a58;border-radius:4px;color:#1a1a1a;">c...</div><div class="bt" style="left:596px;top:208px;width:96px;height:20px;line-height:18px;font-size:11px;background:linear-gradient(#ffdca6,#fbc878);border:1px solid #c49a58;border-radius:4px;color:#1a1a1a;">cuIpcOpenMe...</div>
</body></html>
